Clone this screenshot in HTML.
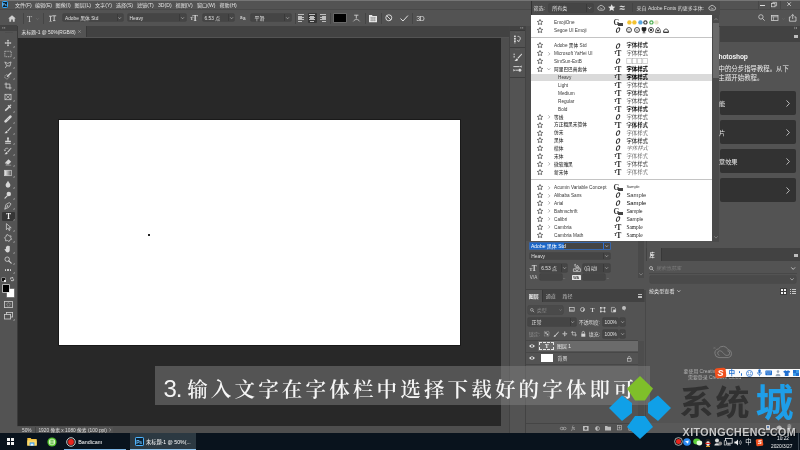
<!DOCTYPE html>
<html lang="zh-CN"><head><meta charset="utf-8"><title>Photoshop</title>
<style>
html,body{margin:0;padding:0;background:#535353;}
#root{will-change:transform;position:relative;width:800px;height:450px;overflow:hidden;font-family:"Liberation Sans","Noto Sans CJK SC",sans-serif;}
#root div,#root span,#root svg{position:absolute;}
#root svg{overflow:visible;}
.t{white-space:nowrap;}
</style></head><body><div id="root">
<div style="left:0px;top:0px;width:800px;height:450px;background:#535353;"></div>
<div style="left:17.3px;top:37.5px;width:483.7px;height:388.3px;background:#282828;"></div>
<div style="left:59.1px;top:119.9px;width:400.5px;height:225px;background:#fff;box-shadow:0 0 0 0.9px #181818;"></div>
<div style="left:148px;top:234px;width:2px;height:2px;background:#222;"></div>
<div style="left:0px;top:0px;width:800px;height:10px;background:#535353;"></div>
<div style="left:1.5px;top:1px;width:6.5px;height:6.5px;background:#0b2233;border:0.7px solid #31a8ff;border-radius:1.2px;box-sizing:border-box;"></div>
<span class="t" style="left:2.6px;top:2px;font-size:3.6px;line-height:6px;color:#7cc6ff;font-weight:bold;letter-spacing:-0.2px;">Ps</span>
<span class="t" style="left:15px;top:1px;font-size:5.1px;line-height:8px;color:#e2e2e2;">文件(F)</span>
<span class="t" style="left:35px;top:1px;font-size:5.1px;line-height:8px;color:#e2e2e2;">编辑(E)</span>
<span class="t" style="left:55.6px;top:1px;font-size:5.1px;line-height:8px;color:#e2e2e2;">图像(I)</span>
<span class="t" style="left:74.6px;top:1px;font-size:5.1px;line-height:8px;color:#e2e2e2;">图层(L)</span>
<span class="t" style="left:95px;top:1px;font-size:5.1px;line-height:8px;color:#e2e2e2;">文字(Y)</span>
<span class="t" style="left:116px;top:1px;font-size:5.1px;line-height:8px;color:#e2e2e2;">选择(S)</span>
<span class="t" style="left:137px;top:1px;font-size:5.1px;line-height:8px;color:#e2e2e2;">滤镜(T)</span>
<span class="t" style="left:158px;top:1px;font-size:5.1px;line-height:8px;color:#e2e2e2;">3D(D)</span>
<span class="t" style="left:175.6px;top:1px;font-size:5.1px;line-height:8px;color:#e2e2e2;">视图(V)</span>
<span class="t" style="left:197px;top:1px;font-size:5.1px;line-height:8px;color:#e2e2e2;">窗口(W)</span>
<span class="t" style="left:219.5px;top:1px;font-size:5.1px;line-height:8px;color:#e2e2e2;">帮助(H)</span>
<div style="left:757.5px;top:1px;width:0.6px;height:8px;background:#484848;"></div>
<div style="left:769.5px;top:1px;width:0.6px;height:8px;background:#484848;"></div>
<div style="left:780px;top:1px;width:0.6px;height:8px;background:#484848;"></div>
<div style="left:759.5px;top:4.9px;width:5px;height:0.9px;background:#dcdcdc;"></div>
<svg style="left:771px;top:2px;" width="6" height="5.2" viewBox="0 0 6 5.2"><rect x="0.4" y="1.6" width="3.6" height="3.2" fill="none" stroke="#d8d8d8" stroke-width="0.7"/><path d="M1.8 1.6V0.4H5.6V3.8H4" fill="none" stroke="#d8d8d8" stroke-width="0.7"/></svg>
<svg style="left:787px;top:2.2px;" width="4.2" height="4.2" viewBox="0 0 4.2 4.2"><path d="M0.3 0.3L3.9 3.9M3.9 0.3L0.3 3.9" stroke="#dcdcdc" stroke-width="0.8"/></svg>
<div style="left:0px;top:10.3px;width:800px;height:15.4px;background:#535353;"></div>
<div style="left:0px;top:9.3px;width:800px;height:1.2px;background:#494949;"></div>
<svg style="left:8px;top:14.5px;" width="8" height="7" viewBox="0 0 8 7"><path d="M4 0.3L0.2 3.6H1.3V6.8H3.2V4.6H4.8V6.8H6.7V3.6H7.8Z" fill="#cfcfcf"/></svg>
<div style="left:22.5px;top:12.5px;width:0.6px;height:11px;background:#454545;"></div>
<span class="t" style="left:26.9px;top:13px;font-size:8.5px;line-height:12px;color:#c4c4c4;font-family:'Liberation Serif',serif;">T</span>
<svg style="left:36px;top:17.5px;" width="3" height="2" viewBox="0 0 3 2"><path d="M0.2 0.3L1.5 1.6L2.8 0.3" fill="none" stroke="#777" stroke-width="0.6"/></svg>
<div style="left:43px;top:12.5px;width:0.6px;height:11px;background:#454545;"></div>
<svg style="left:48.5px;top:14.5px;" width="8" height="7" viewBox="0 0 8 7"><path d="M0 1.2H3M1.5 1.2V6" stroke="#d0d0d0" stroke-width="0.9" fill="none"/><path d="M3.2 0.8H7.2M5.2 0.8V5.4M4 5.6H6.4" stroke="#d0d0d0" stroke-width="0.9" fill="none"/><path d="M0.3 6.4H2.8" stroke="#d0d0d0" stroke-width="0.6"/></svg>
<div style="left:63px;top:14.1px;width:60px;height:7.3px;background:#454545;border-radius:0.8px;box-shadow:0 0 0 0.5px #3c3c3c;"></div>
<span class="t" style="left:65px;top:15px;font-size:4.8px;line-height:7px;color:#e0e0e0;">Adobe 黑体 Std</span>
<svg style="left:118.4px;top:16.75px;" width="3.2" height="2.2" viewBox="0 0 3.2 2.2"><path d="M0.2 0.3L1.6 1.8L3 0.3" fill="none" stroke="#c8c8c8" stroke-width="0.6"/></svg>
<div style="left:116.6px;top:14.1px;width:0.5px;height:7.3px;background:#3a3a3a;"></div>
<div style="left:127.6px;top:14.1px;width:58px;height:7.3px;background:#454545;border-radius:0.8px;box-shadow:0 0 0 0.5px #3c3c3c;"></div>
<span class="t" style="left:129.6px;top:15px;font-size:4.8px;line-height:7px;color:#e0e0e0;">Heavy</span>
<svg style="left:181.0px;top:16.75px;" width="3.2" height="2.2" viewBox="0 0 3.2 2.2"><path d="M0.2 0.3L1.6 1.8L3 0.3" fill="none" stroke="#c8c8c8" stroke-width="0.6"/></svg>
<div style="left:179.2px;top:14.1px;width:0.5px;height:7.3px;background:#3a3a3a;"></div>
<span class="t" style="left:190.3px;top:15px;font-size:4.6px;line-height:7px;color:#d8d8d8;font-family:'Liberation Serif',serif;font-weight:bold;">T</span>
<span class="t" style="left:192.6px;top:13px;font-size:8px;line-height:11px;color:#d8d8d8;font-family:'Liberation Serif',serif;font-weight:bold;">T</span>
<div style="left:202.6px;top:14.1px;width:31.6px;height:7.3px;background:#454545;border-radius:0.8px;box-shadow:0 0 0 0.5px #3c3c3c;"></div>
<span class="t" style="left:204.6px;top:15px;font-size:4.8px;line-height:7px;color:#e0e0e0;">6.53 点</span>
<svg style="left:229.6px;top:16.75px;" width="3.2" height="2.2" viewBox="0 0 3.2 2.2"><path d="M0.2 0.3L1.6 1.8L3 0.3" fill="none" stroke="#c8c8c8" stroke-width="0.6"/></svg>
<div style="left:227.79999999999998px;top:14.1px;width:0.5px;height:7.3px;background:#3a3a3a;"></div>
<span class="t" style="left:240px;top:14px;font-size:4.6px;line-height:7px;color:#d0d0d0;font-weight:bold;">a</span>
<span class="t" style="left:243px;top:15px;font-size:4.6px;line-height:7px;color:#d0d0d0;font-weight:bold;">a</span>
<div style="left:251px;top:14.1px;width:39.6px;height:7.3px;background:#454545;border-radius:0.8px;box-shadow:0 0 0 0.5px #3c3c3c;"></div>
<span class="t" style="left:254.6px;top:15px;font-size:4.9px;line-height:7px;color:#e0e0e0;">平滑</span>
<svg style="left:286.0px;top:16.75px;" width="3.2" height="2.2" viewBox="0 0 3.2 2.2"><path d="M0.2 0.3L1.6 1.8L3 0.3" fill="none" stroke="#c8c8c8" stroke-width="0.6"/></svg>
<div style="left:284.20000000000005px;top:14.1px;width:0.5px;height:7.3px;background:#3a3a3a;"></div>
<div style="left:295px;top:12.5px;width:0.6px;height:11px;background:#454545;"></div>
<div style="left:298px;top:14.3px;width:6.4px;height:0.75px;background:#bcbcbc;"></div>
<div style="left:298px;top:15.55px;width:4.4px;height:0.75px;background:#bcbcbc;"></div>
<div style="left:298px;top:16.8px;width:6.4px;height:0.75px;background:#bcbcbc;"></div>
<div style="left:298px;top:18.05px;width:4.4px;height:0.75px;background:#bcbcbc;"></div>
<div style="left:298px;top:19.3px;width:6.4px;height:0.75px;background:#bcbcbc;"></div>
<div style="left:298px;top:20.55px;width:4.4px;height:0.75px;background:#bcbcbc;"></div>
<div style="left:307.6px;top:12.8px;width:9px;height:10px;background:#363636;border-radius:1px;"></div>
<div style="left:309.0px;top:14.3px;width:6.4px;height:0.75px;background:#bcbcbc;"></div>
<div style="left:310.0px;top:15.55px;width:4.4px;height:0.75px;background:#bcbcbc;"></div>
<div style="left:309.0px;top:16.8px;width:6.4px;height:0.75px;background:#bcbcbc;"></div>
<div style="left:310.0px;top:18.05px;width:4.4px;height:0.75px;background:#bcbcbc;"></div>
<div style="left:309.0px;top:19.3px;width:6.4px;height:0.75px;background:#bcbcbc;"></div>
<div style="left:310.0px;top:20.55px;width:4.4px;height:0.75px;background:#bcbcbc;"></div>
<div style="left:320.0px;top:14.3px;width:6.4px;height:0.75px;background:#bcbcbc;"></div>
<div style="left:322.0px;top:15.55px;width:4.4px;height:0.75px;background:#bcbcbc;"></div>
<div style="left:320.0px;top:16.8px;width:6.4px;height:0.75px;background:#bcbcbc;"></div>
<div style="left:322.0px;top:18.05px;width:4.4px;height:0.75px;background:#bcbcbc;"></div>
<div style="left:320.0px;top:19.3px;width:6.4px;height:0.75px;background:#bcbcbc;"></div>
<div style="left:322.0px;top:20.55px;width:4.4px;height:0.75px;background:#bcbcbc;"></div>
<div style="left:330px;top:12.5px;width:0.6px;height:11px;background:#454545;"></div>
<div style="left:334px;top:14.3px;width:11.8px;height:7.4px;background:#000;box-shadow:0 0 0 0.6px #777;"></div>
<svg style="left:352.5px;top:14px;" width="7" height="8" viewBox="0 0 7 8"><path d="M1.2 1.2H5.4M3.3 1.2V4.6" stroke="#d0d0d0" stroke-width="0.9" fill="none"/><path d="M0.3 7.4C2 4.8 5 4.8 6.7 7.4" stroke="#d0d0d0" stroke-width="0.8" fill="none"/></svg>
<div style="left:364.5px;top:12.5px;width:0.6px;height:11px;background:#454545;"></div>
<svg style="left:369.3px;top:14.6px;" width="8" height="7.2" viewBox="0 0 8 7.2"><path d="M0 0H3L3.6 0.9H8V7.2H0Z" fill="#e8e8e8"/><path d="M1.2 2.4H6.8M1.2 3.9H6.8M1.2 5.4H6.8M3 2.4V6.4M5.2 2.4V6.4" stroke="#666" stroke-width="0.4"/></svg>
<div style="left:381px;top:12.5px;width:0.6px;height:11px;background:#454545;"></div>
<svg style="left:385.2px;top:14px;" width="7.6" height="7.6" viewBox="0 0 7.6 7.6"><circle cx="3.8" cy="3.8" r="3" fill="none" stroke="#e2e2e2" stroke-width="0.9"/><path d="M1.7 1.7L5.9 5.9" stroke="#e2e2e2" stroke-width="0.9"/></svg>
<svg style="left:400px;top:14.5px;" width="8.4" height="6.6" viewBox="0 0 8.4 6.6"><path d="M0.5 3.6L3 6L7.9 0.6" fill="none" stroke="#e2e2e2" stroke-width="1"/></svg>
<div style="left:411.5px;top:12.5px;width:0.6px;height:11px;background:#454545;"></div>
<span class="t" style="left:416.3px;top:13px;font-size:7.2px;line-height:11px;color:#dedede;letter-spacing:-0.7px;">3D</span>
<svg style="left:757.8px;top:14.4px;" width="7" height="7" viewBox="0 0 7 7"><circle cx="2.9" cy="2.9" r="2.2" fill="none" stroke="#cfcfcf" stroke-width="0.8"/><path d="M4.5 4.5L6.6 6.6" stroke="#cfcfcf" stroke-width="0.9"/></svg>
<svg style="left:770.5px;top:15.3px;" width="7.4" height="6" viewBox="0 0 7.4 6"><rect x="0.4" y="0.4" width="6.6" height="5.2" fill="none" stroke="#cfcfcf" stroke-width="0.8"/><path d="M0.4 1.8H7M2.4 1.8V5.6" stroke="#cfcfcf" stroke-width="0.7"/></svg>
<svg style="left:781.8px;top:17.6px;" width="3" height="2" viewBox="0 0 3 2"><path d="M0.2 0.3L1.5 1.6L2.8 0.3" fill="none" stroke="#6a6a6a" stroke-width="0.6"/></svg>
<svg style="left:789px;top:13.8px;" width="7.4" height="7.6" viewBox="0 0 7.4 7.6"><path d="M2 3H0.4V7.2H7V3H5.4" fill="none" stroke="#d4d4d4" stroke-width="0.8"/><path d="M3.7 5V0.6M2.2 2L3.7 0.5L5.2 2" fill="none" stroke="#d4d4d4" stroke-width="0.8"/></svg>
<div style="left:0px;top:25.7px;width:800px;height:0.6px;background:#3c3c3c;"></div>
<div style="left:17px;top:26px;width:492px;height:11px;background:#424242;"></div>
<div style="left:17.5px;top:26.3px;width:68.5px;height:10.7px;background:#535353;"></div>
<div style="left:86px;top:26.3px;width:0.6px;height:10.7px;background:#383838;"></div>
<span class="t" style="left:21.6px;top:29px;font-size:4.85px;line-height:7px;color:#e8e8e8;">未标题-1 @ 50%(RGB/8)</span>
<svg style="left:78.4px;top:30.4px;" width="3" height="3" viewBox="0 0 3 3"><path d="M0.3 0.3L2.7 2.7M2.7 0.3L0.3 2.7" stroke="#bbb" stroke-width="0.5"/></svg>
<div style="left:0px;top:26px;width:17px;height:407px;background:#535353;"></div>
<div style="left:0px;top:25.4px;width:16.6px;height:5.2px;background:#424242;"></div>
<svg style="left:4.5px;top:32.4px;" width="8" height="1" viewBox="0 0 8 1"><path d="M0 0.5H8" stroke="#444" stroke-width="0.6" stroke-dasharray="0.6 0.5"/></svg>
<div style="left:16.6px;top:26px;width:0.7px;height:407px;background:#3a3a3a;"></div>
<svg style="left:2px;top:27.3px;" width="3.4" height="1.8" viewBox="0 0 3.4 1.8"><path d="M0.2 0.9H1.4M2 0.9H3.2" stroke="#bbb" stroke-width="0.8"/></svg>
<svg style="left:4.4px;top:39px;" width="8" height="8" viewBox="0 0 10 10"><path d="M5 0.6L6.4 2.4H5.5V4.5H7.6V3.6L9.4 5L7.6 6.4V5.5H5.5V7.6H6.4L5 9.4L3.6 7.6H4.5V5.5H2.4V6.4L0.6 5L2.4 3.6V4.5H4.5V2.4H3.6Z" fill="#d6d6d6"/></svg>
<svg style="left:12.6px;top:45.6px;" width="1.4" height="1.4" viewBox="0 0 1.4 1.4"><path d="M1.6 0V1.6H0Z" fill="#bdbdbd"/></svg>
<svg style="left:4.4px;top:50px;" width="8" height="8" viewBox="0 0 10 10"><rect x="1" y="1.6" width="8" height="6.8" fill="none" stroke="#d6d6d6" stroke-width="0.9" stroke-dasharray="1.3 0.9"/></svg>
<svg style="left:12.6px;top:56.6px;" width="1.4" height="1.4" viewBox="0 0 1.4 1.4"><path d="M1.6 0V1.6H0Z" fill="#bdbdbd"/></svg>
<svg style="left:4.4px;top:60.5px;" width="8" height="8" viewBox="0 0 10 10"><path d="M1 1.2L4.6 3L8.8 1.2L7.4 6.4L3.4 5.8L1.6 8.8" fill="none" stroke="#d6d6d6" stroke-width="0.9"/><path d="M1 1.2L3.4 5.8" stroke="#d6d6d6" stroke-width="0.9"/></svg>
<svg style="left:12.6px;top:67.1px;" width="1.4" height="1.4" viewBox="0 0 1.4 1.4"><path d="M1.6 0V1.6H0Z" fill="#bdbdbd"/></svg>
<svg style="left:4.4px;top:71.5px;" width="8" height="8" viewBox="0 0 10 10"><circle cx="3.6" cy="6" r="2.6" fill="none" stroke="#d6d6d6" stroke-width="0.8" stroke-dasharray="1.2 0.8"/><path d="M4.4 5.4L8.6 1.2" stroke="#d6d6d6" stroke-width="1.6" stroke-linecap="round"/></svg>
<svg style="left:12.6px;top:78.1px;" width="1.4" height="1.4" viewBox="0 0 1.4 1.4"><path d="M1.6 0V1.6H0Z" fill="#bdbdbd"/></svg>
<svg style="left:4.4px;top:82px;" width="8" height="8" viewBox="0 0 10 10"><path d="M2.6 0.6V7.4H9.4M0.6 2.6H7.4V9.4" fill="none" stroke="#d6d6d6" stroke-width="1"/></svg>
<svg style="left:12.6px;top:88.6px;" width="1.4" height="1.4" viewBox="0 0 1.4 1.4"><path d="M1.6 0V1.6H0Z" fill="#bdbdbd"/></svg>
<svg style="left:4.4px;top:93px;" width="8" height="8" viewBox="0 0 10 10"><rect x="1.2" y="1.6" width="7.6" height="6.8" fill="none" stroke="#d6d6d6" stroke-width="0.9"/><path d="M1.2 1.6L8.8 8.4M8.8 1.6L1.2 8.4" stroke="#d6d6d6" stroke-width="0.7"/></svg>
<svg style="left:12.6px;top:99.6px;" width="1.4" height="1.4" viewBox="0 0 1.4 1.4"><path d="M1.6 0V1.6H0Z" fill="#bdbdbd"/></svg>
<svg style="left:4.4px;top:104px;" width="8" height="8" viewBox="0 0 10 10"><path d="M1 9L1.6 7L5.6 3L7 4.4L3 8.4Z" fill="#d6d6d6"/><path d="M5.4 2L8 4.6M6.4 3.4L8.4 1.4" stroke="#d6d6d6" stroke-width="1.6" stroke-linecap="round"/></svg>
<svg style="left:12.6px;top:110.6px;" width="1.4" height="1.4" viewBox="0 0 1.4 1.4"><path d="M1.6 0V1.6H0Z" fill="#bdbdbd"/></svg>
<svg style="left:4.4px;top:115px;" width="8" height="8" viewBox="0 0 10 10"><path d="M2 8L8 2" stroke="#d6d6d6" stroke-width="3.4" stroke-linecap="round"/><path d="M3.6 6.4L6.4 3.6" stroke="#535353" stroke-width="0.7" stroke-dasharray="0.7 0.7"/></svg>
<svg style="left:12.6px;top:121.6px;" width="1.4" height="1.4" viewBox="0 0 1.4 1.4"><path d="M1.6 0V1.6H0Z" fill="#bdbdbd"/></svg>
<svg style="left:4.4px;top:126px;" width="8" height="8" viewBox="0 0 10 10"><path d="M8.8 0.8L4 6L5 7L9.4 1.6Z" fill="#d6d6d6"/><path d="M3.4 6.4C2 6.6 2 8.4 0.6 9C2.6 9.6 4.6 8.8 4.6 7.4Z" fill="#d6d6d6"/></svg>
<svg style="left:12.6px;top:132.6px;" width="1.4" height="1.4" viewBox="0 0 1.4 1.4"><path d="M1.6 0V1.6H0Z" fill="#bdbdbd"/></svg>
<svg style="left:4.4px;top:136.5px;" width="8" height="8" viewBox="0 0 10 10"><path d="M3.8 1.2C3.8 0 6.2 0 6.2 1.2C6.2 2.6 5.6 3.2 5.8 4.6H8.6V6.6H1.4V4.6H4.2C4.4 3.2 3.8 2.6 3.8 1.2Z" fill="#d6d6d6"/><path d="M1.4 8H8.6" stroke="#d6d6d6" stroke-width="1"/></svg>
<svg style="left:12.6px;top:143.1px;" width="1.4" height="1.4" viewBox="0 0 1.4 1.4"><path d="M1.6 0V1.6H0Z" fill="#bdbdbd"/></svg>
<svg style="left:4.4px;top:147px;" width="8" height="8" viewBox="0 0 10 10"><path d="M8.8 0.8L4 6L5 7L9.4 1.6Z" fill="#d6d6d6"/><path d="M3.4 6.4C2 6.6 2 8.4 0.6 9C2.6 9.6 4.6 8.8 4.6 7.4Z" fill="#d6d6d6"/><path d="M1 4.4A2.6 2.6 0 0 1 5.4 2.2" fill="none" stroke="#d6d6d6" stroke-width="0.8"/><path d="M0.2 3.4L1 5L2.4 4" fill="none" stroke="#d6d6d6" stroke-width="0.7"/></svg>
<svg style="left:12.6px;top:153.6px;" width="1.4" height="1.4" viewBox="0 0 1.4 1.4"><path d="M1.6 0V1.6H0Z" fill="#bdbdbd"/></svg>
<svg style="left:4.4px;top:158px;" width="8" height="8" viewBox="0 0 10 10"><path d="M1 6.4L5.6 1.6L9 4.6L5.6 8.2H3Z" fill="#d6d6d6"/><path d="M1.6 6L4.4 8.4" stroke="#535353" stroke-width="0.7"/><path d="M2 9H9" stroke="#d6d6d6" stroke-width="0.6"/></svg>
<svg style="left:12.6px;top:164.6px;" width="1.4" height="1.4" viewBox="0 0 1.4 1.4"><path d="M1.6 0V1.6H0Z" fill="#bdbdbd"/></svg>
<svg style="left:4.4px;top:169px;" width="8" height="8" viewBox="0 0 10 10"><defs><linearGradient id="gg" x1="0" x2="1"><stop offset="0" stop-color="#f0f0f0"/><stop offset="1" stop-color="#555"/></linearGradient></defs><rect x="0.8" y="1.6" width="8.4" height="6.8" fill="url(#gg)" stroke="#d6d6d6" stroke-width="0.8"/></svg>
<svg style="left:12.6px;top:175.6px;" width="1.4" height="1.4" viewBox="0 0 1.4 1.4"><path d="M1.6 0V1.6H0Z" fill="#bdbdbd"/></svg>
<svg style="left:4.4px;top:180px;" width="8" height="8" viewBox="0 0 10 10"><path d="M5 0.8C6.4 3.4 8 4.8 8 6.6A3 3 0 0 1 2 6.6C2 4.8 3.6 3.4 5 0.8Z" fill="#d6d6d6"/></svg>
<svg style="left:12.6px;top:186.6px;" width="1.4" height="1.4" viewBox="0 0 1.4 1.4"><path d="M1.6 0V1.6H0Z" fill="#bdbdbd"/></svg>
<svg style="left:4.4px;top:191px;" width="8" height="8" viewBox="0 0 10 10"><circle cx="6" cy="3.8" r="2.8" fill="#d6d6d6"/><path d="M4 6L1.2 9" stroke="#d6d6d6" stroke-width="1.4" stroke-linecap="round"/></svg>
<svg style="left:12.6px;top:197.6px;" width="1.4" height="1.4" viewBox="0 0 1.4 1.4"><path d="M1.6 0V1.6H0Z" fill="#bdbdbd"/></svg>
<svg style="left:4.4px;top:201.5px;" width="8" height="8" viewBox="0 0 10 10"><path d="M8.8 2.4L6.6 0.8L2.4 3.2L1 9L6 6.6Z" fill="none" stroke="#d6d6d6" stroke-width="0.9"/><circle cx="4.4" cy="5" r="0.9" fill="#d6d6d6"/><path d="M1 9L4 5.4" stroke="#d6d6d6" stroke-width="0.6"/></svg>
<svg style="left:12.6px;top:208.1px;" width="1.4" height="1.4" viewBox="0 0 1.4 1.4"><path d="M1.6 0V1.6H0Z" fill="#bdbdbd"/></svg>
<div style="left:2px;top:211.6px;width:13px;height:9.4px;background:#363636;border-radius:1px;"></div>
<span class="t" style="left:6px;top:211px;font-size:7.6px;line-height:11px;color:#f0f0f0;font-family:'Liberation Serif',serif;font-weight:bold;">T</span>
<svg style="left:13.2px;top:219px;" width="1.6" height="1.6" viewBox="0 0 1.6 1.6"><path d="M1.6 0V1.6H0Z" fill="#bdbdbd"/></svg>
<svg style="left:4.4px;top:223px;" width="8" height="8" viewBox="0 0 10 10"><path d="M3 0.8V8.4L5 6.4L6.4 9.4L7.6 8.8L6.2 6H9Z" fill="none" stroke="#d6d6d6" stroke-width="0.9"/></svg>
<svg style="left:12.6px;top:229.6px;" width="1.4" height="1.4" viewBox="0 0 1.4 1.4"><path d="M1.6 0V1.6H0Z" fill="#bdbdbd"/></svg>
<svg style="left:4.4px;top:234px;" width="8" height="8" viewBox="0 0 10 10"><path d="M5 0.8L6.4 2.6L8.8 2.4L8.4 4.8L9.6 6.6L7.4 7.4L6.4 9.4L4.4 8.2L2 8.6L2 6.4L0.6 4.6L2.6 3.4L3 1.2Z" fill="none" stroke="#d6d6d6" stroke-width="0.9"/></svg>
<svg style="left:12.6px;top:240.6px;" width="1.4" height="1.4" viewBox="0 0 1.4 1.4"><path d="M1.6 0V1.6H0Z" fill="#bdbdbd"/></svg>
<svg style="left:4.4px;top:245px;" width="8" height="8" viewBox="0 0 10 10"><path d="M2.4 5.6V2.6C2.4 1.8 3.6 1.8 3.6 2.6V1.6C3.6 0.8 4.8 0.8 4.8 1.6V1.4C4.8 0.6 6 0.6 6 1.4V2C6 1.2 7.2 1.2 7.2 2V6.4C7.2 8.4 6.2 9.4 4.6 9.4C3 9.4 2.6 8.6 0.8 6C0.4 5.2 1.4 4.6 2.4 5.6Z" fill="#d6d6d6"/></svg>
<svg style="left:12.6px;top:251.6px;" width="1.4" height="1.4" viewBox="0 0 1.4 1.4"><path d="M1.6 0V1.6H0Z" fill="#bdbdbd"/></svg>
<svg style="left:4.4px;top:256px;" width="8" height="8" viewBox="0 0 10 10"><circle cx="4" cy="4" r="2.8" fill="none" stroke="#d6d6d6" stroke-width="1"/><path d="M6 6L9 9" stroke="#d6d6d6" stroke-width="1.4" stroke-linecap="round"/></svg>
<svg style="left:12.6px;top:262.6px;" width="1.4" height="1.4" viewBox="0 0 1.4 1.4"><path d="M1.6 0V1.6H0Z" fill="#bdbdbd"/></svg>
<div style="left:4.6px;top:269.4px;width:1.4px;height:1.4px;background:#d6d6d6;border-radius:50%;"></div>
<div style="left:7.199999999999999px;top:269.4px;width:1.4px;height:1.4px;background:#d6d6d6;border-radius:50%;"></div>
<div style="left:9.8px;top:269.4px;width:1.4px;height:1.4px;background:#d6d6d6;border-radius:50%;"></div>
<svg style="left:13.2px;top:272px;" width="1.6" height="1.6" viewBox="0 0 1.6 1.6"><path d="M1.6 0V1.6H0Z" fill="#bdbdbd"/></svg>
<div style="left:2.4px;top:278.4px;width:2.4px;height:2.4px;background:#111;box-shadow:0 0 0 0.4px #ccc;"></div>
<div style="left:3.8px;top:279.8px;width:2.4px;height:2.4px;background:#eee;"></div>
<svg style="left:9.6px;top:277.4px;" width="4.4" height="4.4" viewBox="0 0 4.4 4.4"><path d="M0.6 2.4V0.8H3M3.6 1.6V3.6H1.4" fill="none" stroke="#d6d6d6" stroke-width="0.7"/><path d="M2.2 0L3.4 0.8L2.2 1.6ZM2.2 2.8L1 3.6L2.2 4.4Z" fill="#d6d6d6"/></svg>
<div style="left:7px;top:289px;width:7px;height:7.6px;background:#fff;box-shadow:0 0 0 0.5px #999;"></div>
<div style="left:2.6px;top:285px;width:6.6px;height:7px;background:#000;box-shadow:0 0 0 0.7px #ddd;"></div>
<svg style="left:4px;top:300.6px;" width="9" height="7" viewBox="0 0 9 7"><rect x="0.4" y="0.4" width="8.2" height="6.2" fill="none" stroke="#d0d0d0" stroke-width="0.8"/><circle cx="4.5" cy="3.5" r="1.7" fill="none" stroke="#d0d0d0" stroke-width="0.7" stroke-dasharray="0.8 0.6"/></svg>
<svg style="left:4px;top:312px;" width="9" height="8" viewBox="0 0 9 8"><rect x="2.4" y="0.4" width="6.2" height="4.6" fill="none" stroke="#d0d0d0" stroke-width="0.8"/><rect x="0.4" y="2.4" width="6.2" height="4.6" fill="#535353" stroke="#d0d0d0" stroke-width="0.8"/></svg>
<svg style="left:13.2px;top:319px;" width="1.6" height="1.6" viewBox="0 0 1.6 1.6"><path d="M1.6 0V1.6H0Z" fill="#bdbdbd"/></svg>
<div style="left:501px;top:37.5px;width:8px;height:395.5px;background:#4e4e4e;"></div>
<div style="left:509.3px;top:26px;width:16.2px;height:407px;background:#535353;"></div>
<div style="left:509.3px;top:26px;width:16.2px;height:4.2px;background:#424242;"></div>
<svg style="left:519.5px;top:27.3px;" width="3.4" height="1.8" viewBox="0 0 3.4 1.8"><path d="M0.2 0.9H1.4M2 0.9H3.2" stroke="#bbb" stroke-width="0.8"/></svg>
<div style="left:509.3px;top:30.2px;width:16.2px;height:0.6px;background:#3a3a3a;"></div>
<div style="left:509.3px;top:46.6px;width:16.2px;height:0.7px;background:#3e3e3e;"></div>
<div style="left:509.3px;top:76.6px;width:16.2px;height:0.7px;background:#3e3e3e;"></div>
<svg style="left:513px;top:34.5px;" width="9" height="9" viewBox="0 0 9 9"><rect x="1" y="0.6" width="1.8" height="1.6" fill="#d8d8d8"/><rect x="1" y="3" width="1.8" height="1.6" fill="#d8d8d8"/><rect x="1" y="5.4" width="1.8" height="1.6" fill="#d8d8d8"/><path d="M1.9 7V8.6" stroke="#d8d8d8" stroke-width="0.7"/><path d="M4.6 1.4C7.6 1 8.4 4.6 5.4 6" fill="none" stroke="#d8d8d8" stroke-width="0.9"/><path d="M4.2 5L5.2 6.6L6.8 5.8" fill="none" stroke="#d8d8d8" stroke-width="0.8"/></svg>
<svg style="left:514.6px;top:32.2px;" width="5.6" height="1" viewBox="0 0 5.6 1"><path d="M0 0.5H5.6" stroke="#6a6a6a" stroke-width="0.5" stroke-dasharray="0.6 0.5"/></svg>
<div style="left:529.2px;top:34.4px;width:0.9px;height:3.4px;background:#777;"></div>
<div style="left:529.2px;top:47.6px;width:0.9px;height:5px;background:#777;"></div>
<svg style="left:514.6px;top:48.9px;" width="5.6" height="1" viewBox="0 0 5.6 1"><path d="M0 0.5H5" stroke="#6a6a6a" stroke-width="0.5" stroke-dasharray="0.6 0.5"/></svg>
<svg style="left:512.6px;top:52.6px;" width="9" height="9" viewBox="0 0 9 9"><rect x="0.4" y="0.6" width="1.6" height="1.6" fill="#aaa"/><rect x="0.4" y="3" width="1.6" height="1.6" fill="#aaa"/><path d="M8.6 0.6L4.4 5L5.2 5.8L9 1.4Z" fill="#e0e0e0"/><path d="M4 5.4C2.8 5.6 2.8 7.2 1.4 7.8C3.2 8.4 5 7.6 5 6.4Z" fill="#e0e0e0"/></svg>
<svg style="left:512.8px;top:65.4px;" width="9" height="7" viewBox="0 0 9 7"><path d="M0.4 1.6H6.6M2.4 5.2H8.6" stroke="#e0e0e0" stroke-width="0.9"/><path d="M8.6 0.4L6.8 1.6L8.6 2.8ZM0.4 4L2.2 5.2L0.4 6.4Z" fill="#e0e0e0"/><rect x="5.8" y="3.8" width="2" height="2.8" fill="#e0e0e0"/></svg>
<div style="left:526px;top:26px;width:5.5px;height:407px;background:#4b4b4b;"></div>
<div style="left:508.5px;top:26px;width:1px;height:407px;background:#434343;"></div>
<div style="left:525.3px;top:26px;width:1px;height:407px;background:#434343;"></div>
<div style="left:720px;top:25.7px;width:80px;height:5px;background:#424242;"></div>
<div style="left:720px;top:30.5px;width:80px;height:0.5px;background:#383838;"></div>
<div style="left:720px;top:31px;width:80px;height:11px;background:#424242;"></div>
<svg style="left:793.6px;top:27.2px;" width="3.6" height="2" viewBox="0 0 3.6 2"><path d="M0.3 0.2L1.2 1L0.3 1.8M2 0.2L2.9 1L2 1.8" fill="none" stroke="#c8c8c8" stroke-width="0.6"/></svg>
<div style="left:794px;top:35.0px;width:4px;height:0.6px;background:#bdbdbd;"></div>
<div style="left:794px;top:36.1px;width:4px;height:0.6px;background:#bdbdbd;"></div>
<div style="left:794px;top:37.2px;width:4px;height:0.6px;background:#bdbdbd;"></div>
<div style="left:720px;top:42px;width:80px;height:204px;background:#535353;"></div>
<span class="t" style="left:714.2px;top:52px;font-size:6.7px;line-height:9px;color:#f2f2f2;font-weight:bold;letter-spacing:-0.15px;">Photoshop</span>
<span class="t" style="left:705.8px;top:64px;font-size:6.4px;line-height:9px;color:#ededed;">应用中的分步指导教程。从下</span>
<span class="t" style="left:705.8px;top:73px;font-size:6.4px;line-height:9px;color:#ededed;">面的主题开始教程。</span>
<div style="left:720px;top:91px;width:76px;height:24.3px;background:#323232;border-radius:2px;"></div>
<span class="t" style="left:700.4px;top:99px;font-size:6.2px;line-height:9px;color:#e6e6e6;">基本技能</span>
<svg style="left:785.6px;top:99.6px;" width="4" height="7" viewBox="0 0 4 7"><path d="M0.5 0.4L3.4 3.5L0.5 6.6" fill="none" stroke="#d8d8d8" stroke-width="0.8"/></svg>
<div style="left:720px;top:120px;width:76px;height:24.3px;background:#323232;border-radius:2px;"></div>
<span class="t" style="left:700.4px;top:128px;font-size:6.2px;line-height:9px;color:#e6e6e6;">修复照片</span>
<svg style="left:785.6px;top:128.6px;" width="4" height="7" viewBox="0 0 4 7"><path d="M0.5 0.4L3.4 3.5L0.5 6.6" fill="none" stroke="#d8d8d8" stroke-width="0.8"/></svg>
<div style="left:720px;top:149px;width:76px;height:24.3px;background:#323232;border-radius:2px;"></div>
<span class="t" style="left:700.4px;top:157px;font-size:6.2px;line-height:9px;color:#e6e6e6;">制作创意效果</span>
<svg style="left:785.6px;top:157.6px;" width="4" height="7" viewBox="0 0 4 7"><path d="M0.5 0.4L3.4 3.5L0.5 6.6" fill="none" stroke="#d8d8d8" stroke-width="0.8"/></svg>
<div style="left:720px;top:178px;width:76px;height:24.3px;background:#323232;border-radius:2px;"></div>
<svg style="left:785.6px;top:186.6px;" width="4" height="7" viewBox="0 0 4 7"><path d="M0.5 0.4L3.4 3.5L0.5 6.6" fill="none" stroke="#d8d8d8" stroke-width="0.8"/></svg>
<div style="left:644px;top:241px;width:2.5px;height:192px;background:#484848;"></div>
<div style="left:646.4px;top:247.6px;width:153.6px;height:13px;background:#424242;"></div>
<div style="left:646.6px;top:248px;width:14.2px;height:12.6px;background:#535353;"></div>
<div style="left:660.8px;top:248px;width:0.5px;height:12.6px;background:#383838;"></div>
<span class="t" style="left:649.6px;top:251px;font-size:5.2px;line-height:8px;color:#f0f0f0;font-weight:bold;">库</span>
<div style="left:794px;top:254.0px;width:4px;height:0.6px;background:#bdbdbd;"></div>
<div style="left:794px;top:255.1px;width:4px;height:0.6px;background:#bdbdbd;"></div>
<div style="left:794px;top:256.2px;width:4px;height:0.6px;background:#bdbdbd;"></div>
<div style="left:646.2px;top:260.6px;width:153.8px;height:172.4px;background:#535353;"></div>
<svg style="left:649.4px;top:265.6px;" width="5" height="5" viewBox="0 0 5 5"><circle cx="2" cy="2" r="1.5" fill="none" stroke="#d0d0d0" stroke-width="0.7"/><path d="M3.1 3.1L4.6 4.6" stroke="#d0d0d0" stroke-width="0.8"/></svg>
<span class="t" style="left:656px;top:264px;font-size:5px;line-height:8px;color:#7a7a7a;font-style:italic;">搜索当前库</span>
<svg style="left:790.6px;top:266.6px;" width="4.4" height="3" viewBox="0 0 4.4 3"><path d="M0.3 0.4L2.2 2.4L4.1 0.4" fill="none" stroke="#d6d6d6" stroke-width="0.8"/></svg>
<div style="left:648.6px;top:273.2px;width:148px;height:0.5px;background:#484848;"></div>
<div style="left:649.6px;top:276.4px;width:146.8px;height:6.8px;background:#4a4a4a;border-radius:1px;box-shadow:0 0 0 0.4px #444;"></div>
<svg style="left:790px;top:278.4px;" width="4" height="2.6" viewBox="0 0 4 2.6"><path d="M0.3 0.3L2 2.1L3.7 0.3" fill="none" stroke="#c4c4c4" stroke-width="0.7"/></svg>
<span class="t" style="left:649px;top:287px;font-size:5.1px;line-height:8px;color:#e6e6e6;">按类型查看</span>
<svg style="left:677px;top:290px;" width="3.6" height="2.6" viewBox="0 0 3.6 2.6"><path d="M0.3 0.3L1.8 1.9L3.3 0.3" fill="none" stroke="#e0e0e0" stroke-width="0.7"/></svg>
<div style="left:779.6px;top:287.6px;width:7.4px;height:7.4px;background:#3a3a3a;border-radius:1px;"></div>
<div style="left:781.0px;top:289.0px;width:2px;height:2px;background:#f0f0f0;"></div>
<div style="left:781.0px;top:291.6px;width:2px;height:2px;background:#f0f0f0;"></div>
<div style="left:783.6px;top:289.0px;width:2px;height:2px;background:#f0f0f0;"></div>
<div style="left:783.6px;top:291.6px;width:2px;height:2px;background:#f0f0f0;"></div>
<div style="left:789.6px;top:289px;width:1.4px;height:1.2px;background:#c8c8c8;"></div>
<div style="left:791.6px;top:289px;width:4px;height:1.2px;background:#c8c8c8;"></div>
<div style="left:789.6px;top:291px;width:1.4px;height:1.2px;background:#c8c8c8;"></div>
<div style="left:791.6px;top:291px;width:4px;height:1.2px;background:#c8c8c8;"></div>
<div style="left:789.6px;top:293px;width:1.4px;height:1.2px;background:#c8c8c8;"></div>
<div style="left:791.6px;top:293px;width:4px;height:1.2px;background:#c8c8c8;"></div>
<svg style="left:712.6px;top:345.6px;" width="21" height="14" viewBox="0 0 21 14"><path d="M6 11.6A4.4 4.4 0 0 1 5.4 2.9A5.4 5.4 0 0 1 15 3.6A4.1 4.1 0 0 1 15.6 11.6Z" fill="none" stroke="#828282" stroke-width="0.9"/><path d="M6.4 9.4A2.4 2.4 0 0 1 6.4 4.8C8.4 4.6 9.6 6.2 10.6 7.4C11.6 8.6 12.6 9.6 14.4 9.4A2.3 2.3 0 0 0 14.4 4.8" fill="none" stroke="#828282" stroke-width="0.9"/><path d="M0.4 0.8L2.6 3M2.6 0.8L0.4 3" stroke="#7b7b7b" stroke-width="0.5"/></svg>
<span class="t" style="left:683.6px;top:368px;font-size:4.9px;line-height:7px;color:#b4b4b4;">要使用 Creative Cloud Libraries,</span>
<span class="t" style="left:688px;top:374px;font-size:4.9px;line-height:7px;color:#b4b4b4;">需要登录 Creative Cloud</span>
<div style="left:646.5px;top:422.6px;width:153.5px;height:10.4px;background:#595959;"></div>
<div style="left:765.6px;top:425px;width:4.4px;height:4.6px;background:#cfcfcf;border-radius:0.5px;"></div>
<div style="left:766.8px;top:426.2px;width:2px;height:2.2px;background:#5b7fb0;"></div>
<svg style="left:776.4px;top:425px;" width="6" height="4.6" viewBox="0 0 6 4.6"><path d="M1.6 4.2A1.5 1.5 0 0 1 1.6 1.3A2 2 0 0 1 5 1.5A1.4 1.4 0 0 1 4.8 4.2Z" fill="#bbb"/></svg>
<svg style="left:786.8px;top:424.4px;" width="4.6" height="5.6" viewBox="0 0 4.6 5.6"><path d="M0.2 1H4.4M1.6 1V0.3H3V1M0.8 1.4V5.3H3.8V1.4Z" fill="#9a9a9a" stroke="#9a9a9a" stroke-width="0.5"/></svg>
<div style="left:531.5px;top:241px;width:114px;height:48.6px;background:#535353;"></div>
<div style="left:526px;top:241px;width:5.5px;height:192px;background:#4a4a4a;"></div>
<div style="left:526.2px;top:241px;width:119.2px;height:48.6px;background:#535353;"></div>
<div style="left:638.2px;top:241px;width:5.4px;height:37px;background:#4a4a4a;"></div>
<svg style="left:639px;top:273.4px;" width="4" height="2.6" viewBox="0 0 4 2.6"><path d="M0.3 0.3L2 2.1L3.7 0.3" fill="none" stroke="#9a9a9a" stroke-width="0.6"/></svg>
<div style="left:529.8px;top:242.6px;width:79.8px;height:6.6px;background:#444;box-shadow:0 0 0 0.7px #2d6fd0;"></div>
<div style="left:530.4px;top:243.2px;width:33.8px;height:5.4px;background:#1a66c8;"></div>
<span class="t" style="left:531px;top:242px;font-size:5px;line-height:8px;color:#fff;">Adobe 黑体 Std</span>
<div style="left:603.4px;top:242.6px;width:0.5px;height:6.6px;background:#2d6fd0;"></div>
<svg style="left:604.8px;top:244.8px;" width="3.4" height="2.4" viewBox="0 0 3.4 2.4"><path d="M0.3 0.3L1.7 1.9L3.1 0.3" fill="none" stroke="#d0d0d0" stroke-width="0.6"/></svg>
<div style="left:530px;top:252.6px;width:79.6px;height:6.6px;background:#454545;border-radius:0.8px;box-shadow:0 0 0 0.5px #3c3c3c;"></div>
<span class="t" style="left:531.2px;top:253px;font-size:4.9px;line-height:7px;color:#e0e0e0;">Heavy</span>
<svg style="left:605.0px;top:254.9px;" width="3.2" height="2.2" viewBox="0 0 3.2 2.2"><path d="M0.2 0.3L1.6 1.8L3 0.3" fill="none" stroke="#c8c8c8" stroke-width="0.6"/></svg>
<div style="left:603.2px;top:252.6px;width:0.5px;height:6.6px;background:#3a3a3a;"></div>
<span class="t" style="left:529.6px;top:266px;font-size:4.2px;line-height:7px;color:#d8d8d8;font-family:'Liberation Serif',serif;font-weight:bold;">T</span>
<span class="t" style="left:531.8px;top:263px;font-size:7.4px;line-height:11px;color:#d8d8d8;font-family:'Liberation Serif',serif;font-weight:bold;">T</span>
<div style="left:539.6px;top:264.2px;width:27.6px;height:7.4px;background:#454545;border-radius:0.8px;box-shadow:0 0 0 0.5px #3c3c3c;"></div>
<span class="t" style="left:541.2px;top:265px;font-size:4.9px;line-height:7px;color:#e0e0e0;">6.53 点</span>
<svg style="left:562.6px;top:266.9px;" width="3.2" height="2.2" viewBox="0 0 3.2 2.2"><path d="M0.2 0.3L1.6 1.8L3 0.3" fill="none" stroke="#c8c8c8" stroke-width="0.6"/></svg>
<div style="left:560.8000000000001px;top:264.2px;width:0.5px;height:7.4px;background:#3a3a3a;"></div>
<svg style="left:572.6px;top:264px;" width="8.4" height="8" viewBox="0 0 8.4 8"><path d="M1 1.4L2.2 0.2L3.4 1.4M2.2 0.4V3" fill="none" stroke="#d8d8d8" stroke-width="0.6"/><path d="M2.6 4.2L4.6 1.4L6.6 4.2M3.4 3.4H5.8" fill="none" stroke="#d8d8d8" stroke-width="0.7"/><path d="M0.4 4.8H7.6V7.4H0.4ZM2.4 5.6L4 7L5.6 5.6" fill="none" stroke="#d8d8d8" stroke-width="0.7"/></svg>
<div style="left:582.6px;top:264.2px;width:27px;height:7.4px;background:#454545;border-radius:0.8px;box-shadow:0 0 0 0.5px #3c3c3c;"></div>
<span class="t" style="left:584.2px;top:265px;font-size:4.9px;line-height:7px;color:#e0e0e0;">(自动)</span>
<svg style="left:605.0px;top:266.9px;" width="3.2" height="2.2" viewBox="0 0 3.2 2.2"><path d="M0.2 0.3L1.6 1.8L3 0.3" fill="none" stroke="#c8c8c8" stroke-width="0.6"/></svg>
<div style="left:603.2px;top:264.2px;width:0.5px;height:7.4px;background:#3a3a3a;"></div>
<span class="t" style="left:529.8px;top:274px;font-size:4.6px;line-height:7px;color:#cfcfcf;">V/A</span>
<div style="left:539.6px;top:274.4px;width:22px;height:5.8px;background:#454545;border-radius:0.8px;box-shadow:0 0 0 0.5px #3c3c3c;"></div>
<span class="t" style="left:563px;top:274px;font-size:4.4px;line-height:7px;color:#bbb;">..</span>
<div style="left:572.4px;top:274.8px;width:8.6px;height:4.8px;background:#e4e4e4;border-radius:0.6px;"></div>
<span class="t" style="left:573.2px;top:275px;font-size:3.6px;line-height:6px;color:#444;font-weight:bold;">WA</span>
<div style="left:583px;top:274.4px;width:22px;height:5.8px;background:#454545;border-radius:0.8px;box-shadow:0 0 0 0.5px #3c3c3c;"></div>
<span class="t" style="left:606.4px;top:274px;font-size:4.4px;line-height:7px;color:#bbb;">..</span>
<div style="left:526.2px;top:289px;width:117.8px;height:13px;background:#424242;"></div>
<div style="left:526.4px;top:289.6px;width:15.8px;height:12.4px;background:#535353;"></div>
<div style="left:542.2px;top:289.6px;width:0.5px;height:12.4px;background:#383838;"></div>
<span class="t" style="left:528.8px;top:292px;font-size:5px;line-height:8px;color:#f4f4f4;font-weight:bold;">图层</span>
<span class="t" style="left:545.8px;top:292px;font-size:5px;line-height:8px;color:#b4b4b4;">通道</span>
<span class="t" style="left:562.6px;top:292px;font-size:5px;line-height:8px;color:#b4b4b4;">路径</span>
<div style="left:638.3px;top:294.4px;width:4px;height:0.65px;background:#bdbdbd;"></div>
<div style="left:638.3px;top:295.54999999999995px;width:4px;height:0.65px;background:#bdbdbd;"></div>
<div style="left:638.3px;top:296.7px;width:4px;height:0.65px;background:#bdbdbd;"></div>
<div style="left:526.2px;top:301.8px;width:119.2px;height:131.2px;background:#535353;"></div>
<div style="left:638px;top:340.6px;width:6px;height:82.4px;background:#4d4d4d;"></div>
<div style="left:528px;top:305.8px;width:35px;height:8.2px;background:#4a4a4a;border-radius:1px;box-shadow:0 0 0 0.4px #404040;"></div>
<svg style="left:530.4px;top:307.6px;" width="4.6" height="4.6" viewBox="0 0 4.6 4.6"><circle cx="1.8" cy="1.8" r="1.3" fill="none" stroke="#c8c8c8" stroke-width="0.6"/><path d="M2.8 2.8L4.2 4.2" stroke="#c8c8c8" stroke-width="0.7"/></svg>
<span class="t" style="left:536.8px;top:306px;font-size:5px;line-height:8px;color:#858585;">类型</span>
<svg style="left:558.6px;top:309px;" width="3" height="2.2" viewBox="0 0 3 2.2"><path d="M0.3 0.3L1.5 1.7L2.7 0.3" fill="none" stroke="#8a8a8a" stroke-width="0.5"/></svg>
<svg style="left:569px;top:307.2px;" width="5.6" height="4.8" viewBox="0 0 5.6 4.8"><rect x="0.4" y="0.4" width="4.8" height="3.8" fill="none" stroke="#d4d4d4" stroke-width="0.7"/><path d="M0.8 3.6L2 2.2L3 3.2L3.8 2.6L4.8 3.6Z" fill="#d4d4d4"/></svg>
<svg style="left:580px;top:307px;" width="5" height="5" viewBox="0 0 5 5"><circle cx="2.5" cy="2.5" r="2" fill="none" stroke="#d4d4d4" stroke-width="0.7"/><path d="M2.5 0.5A2 2 0 0 1 2.5 4.5L4 1.2Z" fill="#d4d4d4"/></svg>
<span class="t" style="left:590.6px;top:306px;font-size:6px;line-height:8px;color:#d8d8d8;font-family:'Liberation Serif',serif;font-weight:bold;">T</span>
<svg style="left:600.4px;top:307px;" width="5.4" height="5.4" viewBox="0 0 5.4 5.4"><rect x="0.9" y="0.9" width="3.6" height="3.6" fill="none" stroke="#d4d4d4" stroke-width="0.6"/><rect x="0" y="0" width="1.6" height="1.6" fill="#d4d4d4"/><rect x="3.8" y="0" width="1.6" height="1.6" fill="#d4d4d4"/><rect x="0" y="3.8" width="1.6" height="1.6" fill="#d4d4d4"/><rect x="3.8" y="3.8" width="1.6" height="1.6" fill="#d4d4d4"/></svg>
<svg style="left:611px;top:307px;" width="5.4" height="5.4" viewBox="0 0 5.4 5.4"><path d="M0.4 0.4H3.4L4.6 1.6V5H0.4Z" fill="none" stroke="#d4d4d4" stroke-width="0.6"/><rect x="2.2" y="2.6" width="2.6" height="2.4" fill="#d4d4d4"/></svg>
<div style="left:622.2px;top:305.8px;width:3.8px;height:3.8px;background:#bdbdbd;border-radius:50%;"></div>
<div style="left:623.6px;top:309.6px;width:1px;height:1.8px;background:#777;"></div>
<div style="left:528px;top:318px;width:48px;height:8.4px;background:#454545;border-radius:0.8px;box-shadow:0 0 0 0.5px #3c3c3c;"></div>
<span class="t" style="left:531.4px;top:318px;font-size:5px;line-height:8px;color:#e0e0e0;">正常</span>
<svg style="left:571.4px;top:321.2px;" width="3.2" height="2.2" viewBox="0 0 3.2 2.2"><path d="M0.2 0.3L1.6 1.8L3 0.3" fill="none" stroke="#c8c8c8" stroke-width="0.6"/></svg>
<div style="left:569.6px;top:318px;width:0.5px;height:8.4px;background:#3a3a3a;"></div>
<span class="t" style="left:578.8px;top:318px;font-size:5px;line-height:8px;color:#dcdcdc;">不透明度:</span>
<div style="left:603.4px;top:318.4px;width:14.8px;height:7.6px;background:#454545;border-radius:0.8px;box-shadow:0 0 0 0.5px #3c3c3c;"></div>
<span class="t" style="left:604.6px;top:319px;font-size:4.8px;line-height:7px;color:#e0e0e0;">100%</span>
<div style="left:619.8px;top:318.4px;width:5.6px;height:7.6px;background:#454545;border-radius:0.8px;box-shadow:0 0 0 0.5px #3c3c3c;"></div>
<svg style="left:621px;top:321.2px;" width="3.2" height="2.2" viewBox="0 0 3.2 2.2"><path d="M0.2 0.3L1.6 1.8L3 0.3" fill="none" stroke="#c8c8c8" stroke-width="0.6"/></svg>
<span class="t" style="left:528.8px;top:330px;font-size:5px;line-height:8px;color:#8c8c8c;">锁定:</span>
<svg style="left:544px;top:331px;" width="5.4" height="5.4" viewBox="0 0 5.4 5.4"><rect x="0.4" y="0.4" width="4.6" height="4.6" fill="none" stroke="#cfcfcf" stroke-width="0.5" stroke-dasharray="0.8 0.5"/><rect x="1.2" y="1.2" width="1.5" height="1.5" fill="#cfcfcf"/><rect x="2.7" y="2.7" width="1.5" height="1.5" fill="#cfcfcf"/></svg>
<svg style="left:553.2px;top:330.6px;" width="6" height="6" viewBox="0 0 6 6"><path d="M5.6 0.4L2.6 3.6L3.2 4.2L5.9 0.9Z" fill="#d8d8d8"/><path d="M2.2 3.8C1.4 4 1.4 5 0.4 5.6C1.8 5.8 3 5.4 3 4.4Z" fill="#d8d8d8"/></svg>
<svg style="left:562.2px;top:330.8px;" width="5.6" height="5.6" viewBox="0 0 5.6 5.6"><path d="M2.8 0.2L3.7 1.3H3.2V2.4H4.3V1.9L5.4 2.8L4.3 3.7V3.2H3.2V4.3H3.7L2.8 5.4L1.9 4.3H2.4V3.2H1.3V3.7L0.2 2.8L1.3 1.9V2.4H2.4V1.3H1.9Z" fill="#cfcfcf"/></svg>
<svg style="left:571.2px;top:331px;" width="6" height="5.4" viewBox="0 0 6 5.4"><path d="M1.4 0V4H6M0 1.4H4.4V5.4" fill="none" stroke="#cfcfcf" stroke-width="0.6"/></svg>
<svg style="left:581px;top:330.6px;" width="4.6" height="6" viewBox="0 0 4.6 6"><rect x="0.3" y="2.6" width="4" height="3.1" fill="#d4d4d4"/><path d="M1.1 2.6V1.6A1.2 1.2 0 0 1 3.5 1.6V2.6" fill="none" stroke="#d4d4d4" stroke-width="0.7"/></svg>
<span class="t" style="left:588.8px;top:330px;font-size:5px;line-height:8px;color:#dcdcdc;">填充:</span>
<div style="left:603.4px;top:330px;width:14.8px;height:7.6px;background:#454545;border-radius:0.8px;box-shadow:0 0 0 0.5px #3c3c3c;"></div>
<span class="t" style="left:604.6px;top:331px;font-size:4.8px;line-height:7px;color:#e0e0e0;">100%</span>
<div style="left:619.8px;top:330px;width:5.6px;height:7.6px;background:#454545;border-radius:0.8px;box-shadow:0 0 0 0.5px #3c3c3c;"></div>
<svg style="left:621px;top:332.8px;" width="3.2" height="2.2" viewBox="0 0 3.2 2.2"><path d="M0.2 0.3L1.6 1.8L3 0.3" fill="none" stroke="#c8c8c8" stroke-width="0.6"/></svg>
<div style="left:526.2px;top:340.4px;width:111.4px;height:0.5px;background:#474747;"></div>
<div style="left:537.6px;top:340.8px;width:100.4px;height:10.6px;background:#6b6b6b;"></div>
<div style="left:526.2px;top:351.6px;width:111.4px;height:0.6px;background:#474747;"></div>
<div style="left:526.2px;top:363.6px;width:111.4px;height:0.6px;background:#474747;"></div>
<svg style="left:529px;top:344.2px;" width="6" height="4" viewBox="0 0 6 4"><path d="M0.2 2C1.6 0 4.4 0 5.8 2C4.4 4 1.6 4 0.2 2Z" fill="#e4e4e4"/><circle cx="3" cy="2" r="1" fill="#535353"/></svg>
<svg style="left:529px;top:356.2px;" width="6" height="4" viewBox="0 0 6 4"><path d="M0.2 2C1.6 0 4.4 0 5.8 2C4.4 4 1.6 4 0.2 2Z" fill="#e4e4e4"/><circle cx="3" cy="2" r="1" fill="#535353"/></svg>
<div style="left:539.2px;top:342px;width:15.2px;height:8.4px;background:#6b6b6b;border:0.7px dashed #e8e8e8;box-sizing:border-box;"></div>
<span class="t" style="left:545px;top:342px;font-size:5.4px;line-height:8px;color:#f4f4f4;font-family:'Liberation Serif',serif;font-weight:bold;">T</span>
<span class="t" style="left:557px;top:343px;font-size:4.9px;line-height:7px;color:#f0f0f0;">图层 1</span>
<div style="left:540.6px;top:354.4px;width:12.6px;height:7.6px;background:#fff;"></div>
<span class="t" style="left:557.6px;top:355px;font-size:4.9px;line-height:7px;color:#e4e4e4;">背景</span>
<svg style="left:627px;top:355.6px;" width="4.4" height="5.4" viewBox="0 0 4.4 5.4"><rect x="0.3" y="2.4" width="3.8" height="2.8" fill="none" stroke="#cfcfcf" stroke-width="0.6"/><path d="M1.1 2.4V1.5A1.1 1.1 0 0 1 3.3 1.5V2.4" fill="none" stroke="#cfcfcf" stroke-width="0.6"/></svg>
<div style="left:526.2px;top:422.8px;width:119.2px;height:0.6px;background:#454545;"></div>
<svg style="left:559.8px;top:426.6px;" width="6.4" height="3" viewBox="0 0 6.4 3"><rect x="0.3" y="0.3" width="3" height="2.4" rx="1.2" fill="none" stroke="#bdbdbd" stroke-width="0.6"/><rect x="3.1" y="0.3" width="3" height="2.4" rx="1.2" fill="none" stroke="#bdbdbd" stroke-width="0.6"/></svg>
<span class="t" style="left:571.4px;top:424px;font-size:5.2px;line-height:8px;color:#bdbdbd;font-style:italic;font-family:'Liberation Serif',serif;">fx</span>
<svg style="left:582.8px;top:425.6px;" width="5.6" height="4.8" viewBox="0 0 5.6 4.8"><rect x="0" y="0" width="5.6" height="4.8" fill="#bdbdbd"/><circle cx="2.8" cy="2.4" r="1.4" fill="#535353"/></svg>
<svg style="left:594.6px;top:425.6px;" width="5" height="5" viewBox="0 0 5 5"><circle cx="2.5" cy="2.5" r="2" fill="none" stroke="#bdbdbd" stroke-width="0.7"/><path d="M2.5 0.5A2 2 0 0 0 2.5 4.5Z" fill="#bdbdbd"/></svg>
<svg style="left:605.4px;top:425.8px;" width="6" height="4.6" viewBox="0 0 6 4.6"><path d="M0 0H2.2L2.8 0.8H6V4.6H0Z" fill="#bdbdbd"/></svg>
<svg style="left:617px;top:425.4px;" width="5" height="5.2" viewBox="0 0 5 5.2"><rect x="0.3" y="0.3" width="4.4" height="4.6" fill="none" stroke="#bdbdbd" stroke-width="0.6"/><path d="M2.5 1.4V3.8M1.3 2.6H3.7" stroke="#bdbdbd" stroke-width="0.6"/></svg>
<svg style="left:628px;top:425.2px;" width="4.6" height="5.6" viewBox="0 0 4.6 5.6"><path d="M0.2 1H4.4M1.6 1V0.3H3V1M0.8 1.4V5.3H3.8V1.4" fill="none" stroke="#bdbdbd" stroke-width="0.6"/></svg>
<div style="left:531px;top:0px;width:188.5px;height:14.8px;background:#4c4c4c;"></div>
<div style="left:531px;top:0px;width:0.7px;height:241.4px;background:#333;"></div>
<span class="t" style="left:533.6px;top:4px;font-size:5px;line-height:8px;color:#dcdcdc;">筛选:</span>
<div style="left:549.2px;top:3.9px;width:43.4px;height:7.7px;background:#454545;border-radius:0.8px;box-shadow:0 0 0 0.5px #3c3c3c;"></div>
<span class="t" style="left:552.2px;top:4px;font-size:5px;line-height:8px;color:#e0e0e0;">所有类</span>
<svg style="left:588.0px;top:6.75px;" width="3.2" height="2.2" viewBox="0 0 3.2 2.2"><path d="M0.2 0.3L1.6 1.8L3 0.3" fill="none" stroke="#c8c8c8" stroke-width="0.6"/></svg>
<div style="left:586.2px;top:3.9px;width:0.5px;height:7.7px;background:#3a3a3a;"></div>
<svg style="left:596.6px;top:5.4px;" width="8" height="5.6" viewBox="0 0 8 5.6"><path d="M2.4 5.1A1.9 1.9 0 0 1 2.2 1.4A2.4 2.4 0 0 1 6.3 1.7A1.75 1.75 0 0 1 6.2 5.1Z" fill="none" stroke="#d8d8d8" stroke-width="0.8"/><path d="M2.8 3.3C3.6 2.4 4.4 4.2 5.4 3.3" fill="none" stroke="#d8d8d8" stroke-width="0.6"/></svg>
<svg style="left:608px;top:4.4px;" width="7.4" height="7" viewBox="0 0 7.4 7"><path d="M3.7 0.2L4.8 2.5L7.3 2.8L5.4 4.5L5.9 7L3.7 5.8L1.5 7L2 4.5L0.1 2.8L2.6 2.5Z" fill="#e4e4e4"/></svg>
<span class="t" style="left:619.6px;top:1px;font-size:9.6px;line-height:13px;color:#e0e0e0;font-weight:bold;">≈</span>
<div style="left:632px;top:3.4px;width:0.6px;height:9px;background:#444;"></div>
<span class="t" style="left:636.6px;top:4px;font-size:5px;line-height:8px;color:#dcdcdc;">来自 Adobe Fonts 的更多字体:</span>
<svg style="left:708.4px;top:5.4px;" width="8" height="5.6" viewBox="0 0 8 5.6"><path d="M2.4 5.1A1.9 1.9 0 0 1 2.2 1.4A2.4 2.4 0 0 1 6.3 1.7A1.75 1.75 0 0 1 6.2 5.1Z" fill="none" stroke="#d8d8d8" stroke-width="0.8"/><path d="M2.8 3.3C3.6 2.4 4.4 4.2 5.4 3.3" fill="none" stroke="#d8d8d8" stroke-width="0.6"/></svg>
<div style="left:531.2px;top:14.8px;width:180.8px;height:226.1px;background:#fff;"></div>
<div style="left:712px;top:14.8px;width:7.4px;height:227px;background:#4a4a4a;"></div>
<div style="left:712.8px;top:22.6px;width:5.8px;height:55px;background:#6a6a6a;"></div>
<svg style="left:713.6px;top:18px;" width="4" height="2.6" viewBox="0 0 4 2.6"><path d="M0.3 2.2L2 0.4L3.7 2.2" fill="none" stroke="#9a9a9a" stroke-width="0.6"/></svg>
<svg style="left:713.6px;top:235.8px;" width="4" height="2.6" viewBox="0 0 4 2.6"><path d="M0.3 0.3L2 2.1L3.7 0.3" fill="none" stroke="#9a9a9a" stroke-width="0.6"/></svg>
<div style="left:531.2px;top:73.6px;width:180.8px;height:7.6px;background:#dadada;"></div>
<div style="left:531.2px;top:37.3px;width:180.8px;height:0.9px;background:#c4c4c4;"></div>
<div style="left:531.2px;top:179.3px;width:180.8px;height:0.9px;background:#c4c4c4;"></div>
<svg style="left:537.4px;top:42.4px;" width="6" height="5.8" viewBox="0 0 6.8 6.6"><path d="M3.4 0.5L4.3 2.5L6.5 2.8L4.9 4.3L5.3 6.4L3.4 5.4L1.5 6.4L1.9 4.3L0.3 2.8L2.5 2.5Z" fill="none" stroke="#333" stroke-width="0.75" stroke-linejoin="round"/></svg>
<span class="t" style="left:554px;top:42px;font-size:4.7px;line-height:7px;color:#383838;font-weight:500;">Adobe 黑体 Std</span>
<svg style="left:615px;top:42.5px;" width="6" height="6" viewBox="0 0 6 6"><g transform="skewX(-14)"><ellipse cx="3.8" cy="3" rx="1.55" ry="2.35" fill="none" stroke="#2a2a2a" stroke-width="0.95"/></g></svg>
<span class="t" style="left:626.4px;top:41px;font-size:5.4px;line-height:8px;color:#333;font-weight:bold;color:#222;">字体样式</span>
<svg style="left:537.4px;top:50.32px;" width="6" height="5.8" viewBox="0 0 6.8 6.6"><path d="M3.4 0.5L4.3 2.5L6.5 2.8L4.9 4.3L5.3 6.4L3.4 5.4L1.5 6.4L1.9 4.3L0.3 2.8L2.5 2.5Z" fill="none" stroke="#333" stroke-width="0.75" stroke-linejoin="round"/></svg>
<svg style="left:547.6px;top:51.52px;" width="2.4" height="3.8" viewBox="0 0 2.4 3.8"><path d="M0.3 0.3L1.9 1.9L0.3 3.5" fill="none" stroke="#666" stroke-width="0.5"/></svg>
<span class="t" style="left:554px;top:50px;font-size:4.7px;line-height:7px;color:#383838;font-weight:500;">Microsoft YaHei UI</span>
<span class="t" style="left:614px;top:49px;font-size:4.4px;line-height:7px;color:#2a2a2a;font-family:'Liberation Serif',serif;font-weight:bold;">T</span>
<span class="t" style="left:616.2px;top:48px;font-size:7.6px;line-height:11px;color:#2a2a2a;font-family:'Liberation Serif',serif;font-weight:bold;">T</span>
<span class="t" style="left:626.4px;top:49px;font-size:5.4px;line-height:8px;color:#333;font-weight:400;color:#4a4a4a;">字体样式</span>
<svg style="left:537.4px;top:58.24px;" width="6" height="5.8" viewBox="0 0 6.8 6.6"><path d="M3.4 0.5L4.3 2.5L6.5 2.8L4.9 4.3L5.3 6.4L3.4 5.4L1.5 6.4L1.9 4.3L0.3 2.8L2.5 2.5Z" fill="none" stroke="#333" stroke-width="0.75" stroke-linejoin="round"/></svg>
<span class="t" style="left:554px;top:58px;font-size:4.7px;line-height:7px;color:#383838;font-weight:500;">SimSun-ExtB</span>
<svg style="left:615px;top:58.34px;" width="6" height="6" viewBox="0 0 6 6"><g transform="skewX(-14)"><ellipse cx="3.8" cy="3" rx="1.55" ry="2.35" fill="none" stroke="#2a2a2a" stroke-width="0.95"/></g></svg>
<span class="t" style="left:626.2px;top:57px;font-size:5.6px;line-height:8px;color:#555;letter-spacing:-0.2px;font-weight:500;font-family:'Noto Sans CJK SC','Liberation Sans',sans-serif;">□□□□</span>
<svg style="left:537.4px;top:66.16px;" width="6" height="5.8" viewBox="0 0 6.8 6.6"><path d="M3.4 0.5L4.3 2.5L6.5 2.8L4.9 4.3L5.3 6.4L3.4 5.4L1.5 6.4L1.9 4.3L0.3 2.8L2.5 2.5Z" fill="none" stroke="#333" stroke-width="0.75" stroke-linejoin="round"/></svg>
<svg style="left:546.6px;top:68.25999999999999px;" width="3.6" height="2.4" viewBox="0 0 3.6 2.4"><path d="M0.3 0.3L1.8 1.9L3.3 0.3" fill="none" stroke="#666" stroke-width="0.5"/></svg>
<span class="t" style="left:554px;top:66px;font-size:4.7px;line-height:7px;color:#383838;font-weight:500;">阿里巴巴普惠体</span>
<span class="t" style="left:614px;top:65px;font-size:4.4px;line-height:7px;color:#2a2a2a;font-family:'Liberation Serif',serif;font-weight:bold;">T</span>
<span class="t" style="left:616.2px;top:64px;font-size:7.6px;line-height:11px;color:#2a2a2a;font-family:'Liberation Serif',serif;font-weight:bold;">T</span>
<span class="t" style="left:626.4px;top:65px;font-size:5.4px;line-height:8px;color:#333;font-weight:900;color:#111;">字体样式</span>
<span class="t" style="left:558px;top:74px;font-size:4.7px;line-height:7px;color:#383838;font-weight:500;">Heavy</span>
<span class="t" style="left:614px;top:73px;font-size:4.4px;line-height:7px;color:#2a2a2a;font-family:'Liberation Serif',serif;font-weight:bold;">T</span>
<span class="t" style="left:616.2px;top:72px;font-size:7.6px;line-height:11px;color:#2a2a2a;font-family:'Liberation Serif',serif;font-weight:bold;">T</span>
<span class="t" style="left:626.4px;top:73px;font-size:5.4px;line-height:8px;color:#333;font-weight:900;color:#111;">字体样式</span>
<span class="t" style="left:558px;top:82px;font-size:4.7px;line-height:7px;color:#383838;font-weight:500;">Light</span>
<span class="t" style="left:614px;top:81px;font-size:4.4px;line-height:7px;color:#2a2a2a;font-family:'Liberation Serif',serif;font-weight:bold;">T</span>
<span class="t" style="left:616.2px;top:80px;font-size:7.6px;line-height:11px;color:#2a2a2a;font-family:'Liberation Serif',serif;font-weight:bold;">T</span>
<span class="t" style="left:626.4px;top:81px;font-size:5.4px;line-height:8px;color:#333;font-weight:400;color:#4a4a4a;">字体样式</span>
<span class="t" style="left:558px;top:90px;font-size:4.7px;line-height:7px;color:#383838;font-weight:500;">Medium</span>
<span class="t" style="left:614px;top:89px;font-size:4.4px;line-height:7px;color:#2a2a2a;font-family:'Liberation Serif',serif;font-weight:bold;">T</span>
<span class="t" style="left:616.2px;top:88px;font-size:7.6px;line-height:11px;color:#2a2a2a;font-family:'Liberation Serif',serif;font-weight:bold;">T</span>
<span class="t" style="left:626.4px;top:89px;font-size:5.4px;line-height:8px;color:#333;font-weight:500;color:#333;">字体样式</span>
<span class="t" style="left:558px;top:98px;font-size:4.7px;line-height:7px;color:#383838;font-weight:500;">Regular</span>
<span class="t" style="left:614px;top:97px;font-size:4.4px;line-height:7px;color:#2a2a2a;font-family:'Liberation Serif',serif;font-weight:bold;">T</span>
<span class="t" style="left:616.2px;top:96px;font-size:7.6px;line-height:11px;color:#2a2a2a;font-family:'Liberation Serif',serif;font-weight:bold;">T</span>
<span class="t" style="left:626.4px;top:97px;font-size:5.4px;line-height:8px;color:#333;font-weight:400;color:#444;">字体样式</span>
<span class="t" style="left:558px;top:106px;font-size:4.7px;line-height:7px;color:#383838;font-weight:500;">Bold</span>
<span class="t" style="left:614px;top:105px;font-size:4.4px;line-height:7px;color:#2a2a2a;font-family:'Liberation Serif',serif;font-weight:bold;">T</span>
<span class="t" style="left:616.2px;top:104px;font-size:7.6px;line-height:11px;color:#2a2a2a;font-family:'Liberation Serif',serif;font-weight:bold;">T</span>
<span class="t" style="left:626.4px;top:105px;font-size:5.4px;line-height:8px;color:#333;font-weight:bold;color:#111;">字体样式</span>
<svg style="left:537.4px;top:113.68px;" width="6" height="5.8" viewBox="0 0 6.8 6.6"><path d="M3.4 0.5L4.3 2.5L6.5 2.8L4.9 4.3L5.3 6.4L3.4 5.4L1.5 6.4L1.9 4.3L0.3 2.8L2.5 2.5Z" fill="none" stroke="#333" stroke-width="0.75" stroke-linejoin="round"/></svg>
<svg style="left:547.6px;top:114.88px;" width="2.4" height="3.8" viewBox="0 0 2.4 3.8"><path d="M0.3 0.3L1.9 1.9L0.3 3.5" fill="none" stroke="#666" stroke-width="0.5"/></svg>
<span class="t" style="left:554px;top:114px;font-size:4.7px;line-height:7px;color:#383838;font-weight:500;">等线</span>
<svg style="left:615px;top:113.78px;" width="6" height="6" viewBox="0 0 6 6"><g transform="skewX(-14)"><ellipse cx="3.8" cy="3" rx="1.55" ry="2.35" fill="none" stroke="#2a2a2a" stroke-width="0.95"/></g></svg>
<span class="t" style="left:626.4px;top:113px;font-size:5.4px;line-height:8px;color:#333;font-weight:400;color:#555;">字体样式</span>
<svg style="left:537.4px;top:121.60000000000001px;" width="6" height="5.8" viewBox="0 0 6.8 6.6"><path d="M3.4 0.5L4.3 2.5L6.5 2.8L4.9 4.3L5.3 6.4L3.4 5.4L1.5 6.4L1.9 4.3L0.3 2.8L2.5 2.5Z" fill="none" stroke="#333" stroke-width="0.75" stroke-linejoin="round"/></svg>
<span class="t" style="left:554px;top:121px;font-size:4.7px;line-height:7px;color:#383838;font-weight:500;">方正粗黑宋简体</span>
<span class="t" style="left:614px;top:120px;font-size:4.4px;line-height:7px;color:#2a2a2a;font-family:'Liberation Serif',serif;font-weight:bold;">T</span>
<span class="t" style="left:616.2px;top:120px;font-size:7.6px;line-height:11px;color:#2a2a2a;font-family:'Liberation Serif',serif;font-weight:bold;">T</span>
<span class="t" style="left:626.4px;top:121px;font-size:5.4px;line-height:8px;color:#333;font-family:'Liberation Serif','Noto Serif CJK SC',serif;font-weight:900;color:#111;">字体样式</span>
<svg style="left:537.4px;top:129.52px;" width="6" height="5.8" viewBox="0 0 6.8 6.6"><path d="M3.4 0.5L4.3 2.5L6.5 2.8L4.9 4.3L5.3 6.4L3.4 5.4L1.5 6.4L1.9 4.3L0.3 2.8L2.5 2.5Z" fill="none" stroke="#333" stroke-width="0.75" stroke-linejoin="round"/></svg>
<span class="t" style="left:554px;top:129px;font-size:4.7px;line-height:7px;color:#383838;font-weight:500;">仿宋</span>
<svg style="left:615px;top:129.62px;" width="6" height="6" viewBox="0 0 6 6"><g transform="skewX(-14)"><ellipse cx="3.8" cy="3" rx="1.55" ry="2.35" fill="none" stroke="#2a2a2a" stroke-width="0.95"/></g></svg>
<span class="t" style="left:626.4px;top:129px;font-size:5.4px;line-height:8px;color:#333;font-family:'Liberation Serif','Noto Serif CJK SC',serif;font-weight:400;color:#4a4a4a;">字体样式</span>
<svg style="left:537.4px;top:137.44px;" width="6" height="5.8" viewBox="0 0 6.8 6.6"><path d="M3.4 0.5L4.3 2.5L6.5 2.8L4.9 4.3L5.3 6.4L3.4 5.4L1.5 6.4L1.9 4.3L0.3 2.8L2.5 2.5Z" fill="none" stroke="#333" stroke-width="0.75" stroke-linejoin="round"/></svg>
<span class="t" style="left:554px;top:137px;font-size:4.7px;line-height:7px;color:#383838;font-weight:500;">黑体</span>
<svg style="left:615px;top:137.54px;" width="6" height="6" viewBox="0 0 6 6"><g transform="skewX(-14)"><ellipse cx="3.8" cy="3" rx="1.55" ry="2.35" fill="none" stroke="#2a2a2a" stroke-width="0.95"/></g></svg>
<span class="t" style="left:626.4px;top:137px;font-size:5.4px;line-height:8px;color:#333;font-weight:500;color:#333;">字体样式</span>
<svg style="left:537.4px;top:145.35999999999999px;" width="6" height="5.8" viewBox="0 0 6.8 6.6"><path d="M3.4 0.5L4.3 2.5L6.5 2.8L4.9 4.3L5.3 6.4L3.4 5.4L1.5 6.4L1.9 4.3L0.3 2.8L2.5 2.5Z" fill="none" stroke="#333" stroke-width="0.75" stroke-linejoin="round"/></svg>
<span class="t" style="left:554px;top:145px;font-size:4.7px;line-height:7px;color:#383838;font-weight:500;">楷体</span>
<svg style="left:615px;top:145.45999999999998px;" width="6" height="6" viewBox="0 0 6 6"><g transform="skewX(-14)"><ellipse cx="3.8" cy="3" rx="1.55" ry="2.35" fill="none" stroke="#2a2a2a" stroke-width="0.95"/></g></svg>
<span class="t" style="left:626.4px;top:144px;font-size:5.4px;line-height:8px;color:#333;font-family:'Liberation Serif','Noto Serif CJK SC',serif;font-weight:400;color:#444;font-style:italic;">字体样式</span>
<svg style="left:537.4px;top:153.28px;" width="6" height="5.8" viewBox="0 0 6.8 6.6"><path d="M3.4 0.5L4.3 2.5L6.5 2.8L4.9 4.3L5.3 6.4L3.4 5.4L1.5 6.4L1.9 4.3L0.3 2.8L2.5 2.5Z" fill="none" stroke="#333" stroke-width="0.75" stroke-linejoin="round"/></svg>
<span class="t" style="left:554px;top:153px;font-size:4.7px;line-height:7px;color:#383838;font-weight:500;">宋体</span>
<span class="t" style="left:614px;top:152px;font-size:4.4px;line-height:7px;color:#2a2a2a;font-family:'Liberation Serif',serif;font-weight:bold;">T</span>
<span class="t" style="left:616.2px;top:151px;font-size:7.6px;line-height:11px;color:#2a2a2a;font-family:'Liberation Serif',serif;font-weight:bold;">T</span>
<span class="t" style="left:626.4px;top:152px;font-size:5.4px;line-height:8px;color:#333;font-family:'Liberation Serif','Noto Serif CJK SC',serif;font-weight:400;color:#555;">字体样式</span>
<svg style="left:537.4px;top:161.20000000000002px;" width="6" height="5.8" viewBox="0 0 6.8 6.6"><path d="M3.4 0.5L4.3 2.5L6.5 2.8L4.9 4.3L5.3 6.4L3.4 5.4L1.5 6.4L1.9 4.3L0.3 2.8L2.5 2.5Z" fill="none" stroke="#333" stroke-width="0.75" stroke-linejoin="round"/></svg>
<svg style="left:547.6px;top:162.4px;" width="2.4" height="3.8" viewBox="0 0 2.4 3.8"><path d="M0.3 0.3L1.9 1.9L0.3 3.5" fill="none" stroke="#666" stroke-width="0.5"/></svg>
<span class="t" style="left:554px;top:161px;font-size:4.7px;line-height:7px;color:#383838;font-weight:500;">微软雅黑</span>
<span class="t" style="left:614px;top:160px;font-size:4.4px;line-height:7px;color:#2a2a2a;font-family:'Liberation Serif',serif;font-weight:bold;">T</span>
<span class="t" style="left:616.2px;top:159px;font-size:7.6px;line-height:11px;color:#2a2a2a;font-family:'Liberation Serif',serif;font-weight:bold;">T</span>
<span class="t" style="left:626.4px;top:160px;font-size:5.4px;line-height:8px;color:#333;font-weight:400;color:#444;">字体样式</span>
<svg style="left:537.4px;top:169.12px;" width="6" height="5.8" viewBox="0 0 6.8 6.6"><path d="M3.4 0.5L4.3 2.5L6.5 2.8L4.9 4.3L5.3 6.4L3.4 5.4L1.5 6.4L1.9 4.3L0.3 2.8L2.5 2.5Z" fill="none" stroke="#333" stroke-width="0.75" stroke-linejoin="round"/></svg>
<span class="t" style="left:554px;top:169px;font-size:4.7px;line-height:7px;color:#383838;font-weight:500;">新宋体</span>
<span class="t" style="left:614px;top:168px;font-size:4.4px;line-height:7px;color:#2a2a2a;font-family:'Liberation Serif',serif;font-weight:bold;">T</span>
<span class="t" style="left:616.2px;top:167px;font-size:7.6px;line-height:11px;color:#2a2a2a;font-family:'Liberation Serif',serif;font-weight:bold;">T</span>
<span class="t" style="left:626.4px;top:168px;font-size:5.4px;line-height:8px;color:#333;font-family:'Liberation Serif','Noto Serif CJK SC',serif;font-weight:400;color:#555;">字体样式</span>
<svg style="left:537.4px;top:184.4px;" width="6" height="5.8" viewBox="0 0 6.8 6.6"><path d="M3.4 0.5L4.3 2.5L6.5 2.8L4.9 4.3L5.3 6.4L3.4 5.4L1.5 6.4L1.9 4.3L0.3 2.8L2.5 2.5Z" fill="none" stroke="#333" stroke-width="0.75" stroke-linejoin="round"/></svg>
<svg style="left:547.6px;top:185.6px;" width="2.4" height="3.8" viewBox="0 0 2.4 3.8"><path d="M0.3 0.3L1.9 1.9L0.3 3.5" fill="none" stroke="#666" stroke-width="0.5"/></svg>
<span class="t" style="left:554px;top:184px;font-size:4.7px;line-height:7px;color:#383838;font-weight:500;">Acumin Variable Concept</span>
<span class="t" style="left:613.6px;top:182px;font-size:7.4px;line-height:11px;color:#333;font-family:'Liberation Serif',serif;font-weight:bold;">G</span>
<div style="left:618.2px;top:187.9px;width:4.6px;height:0.6px;background:#444;"></div>
<div style="left:618.2px;top:189.0px;width:4.6px;height:0.6px;background:#444;"></div>
<div style="left:618.2px;top:190.1px;width:4.6px;height:0.6px;background:#444;"></div>
<span class="t" style="left:626.4px;top:183px;font-size:5.4px;line-height:8px;color:#333;font-size:4.2px;color:#444;letter-spacing:-0.2px;">Sample</span>
<svg style="left:537.4px;top:192.32px;" width="6" height="5.8" viewBox="0 0 6.8 6.6"><path d="M3.4 0.5L4.3 2.5L6.5 2.8L4.9 4.3L5.3 6.4L3.4 5.4L1.5 6.4L1.9 4.3L0.3 2.8L2.5 2.5Z" fill="none" stroke="#333" stroke-width="0.75" stroke-linejoin="round"/></svg>
<svg style="left:547.6px;top:193.51999999999998px;" width="2.4" height="3.8" viewBox="0 0 2.4 3.8"><path d="M0.3 0.3L1.9 1.9L0.3 3.5" fill="none" stroke="#666" stroke-width="0.5"/></svg>
<span class="t" style="left:554px;top:192px;font-size:4.7px;line-height:7px;color:#383838;font-weight:500;">Alibaba Sans</span>
<svg style="left:615px;top:192.42px;" width="6" height="6" viewBox="0 0 6 6"><g transform="skewX(-14)"><ellipse cx="3.8" cy="3" rx="1.55" ry="2.35" fill="none" stroke="#2a2a2a" stroke-width="0.95"/></g></svg>
<span class="t" style="left:626.4px;top:191px;font-size:5.4px;line-height:8px;color:#333;font-size:5.9px;color:#3a3a3a;">Sample</span>
<svg style="left:537.4px;top:200.24px;" width="6" height="5.8" viewBox="0 0 6.8 6.6"><path d="M3.4 0.5L4.3 2.5L6.5 2.8L4.9 4.3L5.3 6.4L3.4 5.4L1.5 6.4L1.9 4.3L0.3 2.8L2.5 2.5Z" fill="none" stroke="#333" stroke-width="0.75" stroke-linejoin="round"/></svg>
<svg style="left:547.6px;top:201.44px;" width="2.4" height="3.8" viewBox="0 0 2.4 3.8"><path d="M0.3 0.3L1.9 1.9L0.3 3.5" fill="none" stroke="#666" stroke-width="0.5"/></svg>
<span class="t" style="left:554px;top:200px;font-size:4.7px;line-height:7px;color:#383838;font-weight:500;">Arial</span>
<svg style="left:615px;top:200.34px;" width="6" height="6" viewBox="0 0 6 6"><g transform="skewX(-14)"><ellipse cx="3.8" cy="3" rx="1.55" ry="2.35" fill="none" stroke="#2a2a2a" stroke-width="0.95"/></g></svg>
<span class="t" style="left:626.4px;top:199px;font-size:5.4px;line-height:8px;color:#333;font-size:5.9px;color:#111;">Sample</span>
<svg style="left:537.4px;top:208.16px;" width="6" height="5.8" viewBox="0 0 6.8 6.6"><path d="M3.4 0.5L4.3 2.5L6.5 2.8L4.9 4.3L5.3 6.4L3.4 5.4L1.5 6.4L1.9 4.3L0.3 2.8L2.5 2.5Z" fill="none" stroke="#333" stroke-width="0.75" stroke-linejoin="round"/></svg>
<svg style="left:547.6px;top:209.35999999999999px;" width="2.4" height="3.8" viewBox="0 0 2.4 3.8"><path d="M0.3 0.3L1.9 1.9L0.3 3.5" fill="none" stroke="#666" stroke-width="0.5"/></svg>
<span class="t" style="left:554px;top:208px;font-size:4.7px;line-height:7px;color:#383838;font-weight:500;">Bahnschrift</span>
<span class="t" style="left:613.6px;top:206px;font-size:7.4px;line-height:11px;color:#333;font-family:'Liberation Serif',serif;font-weight:bold;">G</span>
<div style="left:618.2px;top:211.66px;width:4.6px;height:0.6px;background:#444;"></div>
<div style="left:618.2px;top:212.76px;width:4.6px;height:0.6px;background:#444;"></div>
<div style="left:618.2px;top:213.85999999999999px;width:4.6px;height:0.6px;background:#444;"></div>
<span class="t" style="left:626.4px;top:207px;font-size:5.4px;line-height:8px;color:#333;font-size:5px;color:#333;letter-spacing:-0.15px;">Sample</span>
<svg style="left:537.4px;top:216.08px;" width="6" height="5.8" viewBox="0 0 6.8 6.6"><path d="M3.4 0.5L4.3 2.5L6.5 2.8L4.9 4.3L5.3 6.4L3.4 5.4L1.5 6.4L1.9 4.3L0.3 2.8L2.5 2.5Z" fill="none" stroke="#333" stroke-width="0.75" stroke-linejoin="round"/></svg>
<svg style="left:547.6px;top:217.28px;" width="2.4" height="3.8" viewBox="0 0 2.4 3.8"><path d="M0.3 0.3L1.9 1.9L0.3 3.5" fill="none" stroke="#666" stroke-width="0.5"/></svg>
<span class="t" style="left:554px;top:216px;font-size:4.7px;line-height:7px;color:#383838;font-weight:500;">Calibri</span>
<svg style="left:615px;top:216.18px;" width="6" height="6" viewBox="0 0 6 6"><g transform="skewX(-14)"><ellipse cx="3.8" cy="3" rx="1.55" ry="2.35" fill="none" stroke="#2a2a2a" stroke-width="0.95"/></g></svg>
<span class="t" style="left:626.4px;top:215px;font-size:5.4px;line-height:8px;color:#333;font-size:5px;color:#333;">Sample</span>
<svg style="left:537.4px;top:224.0px;" width="6" height="5.8" viewBox="0 0 6.8 6.6"><path d="M3.4 0.5L4.3 2.5L6.5 2.8L4.9 4.3L5.3 6.4L3.4 5.4L1.5 6.4L1.9 4.3L0.3 2.8L2.5 2.5Z" fill="none" stroke="#333" stroke-width="0.75" stroke-linejoin="round"/></svg>
<svg style="left:547.6px;top:225.2px;" width="2.4" height="3.8" viewBox="0 0 2.4 3.8"><path d="M0.3 0.3L1.9 1.9L0.3 3.5" fill="none" stroke="#666" stroke-width="0.5"/></svg>
<span class="t" style="left:554px;top:224px;font-size:4.7px;line-height:7px;color:#383838;font-weight:500;">Cambria</span>
<span class="t" style="left:614px;top:223px;font-size:4.4px;line-height:7px;color:#2a2a2a;font-family:'Liberation Serif',serif;font-weight:bold;">T</span>
<span class="t" style="left:616.2px;top:222px;font-size:7.6px;line-height:11px;color:#2a2a2a;font-family:'Liberation Serif',serif;font-weight:bold;">T</span>
<span class="t" style="left:626.4px;top:223px;font-size:5.4px;line-height:8px;color:#333;font-size:5.4px;color:#222;font-family:'Liberation Serif','Noto Serif CJK SC',serif;">Sample</span>
<svg style="left:537.4px;top:231.92px;" width="6" height="5.8" viewBox="0 0 6.8 6.6"><path d="M3.4 0.5L4.3 2.5L6.5 2.8L4.9 4.3L5.3 6.4L3.4 5.4L1.5 6.4L1.9 4.3L0.3 2.8L2.5 2.5Z" fill="none" stroke="#333" stroke-width="0.75" stroke-linejoin="round"/></svg>
<span class="t" style="left:554px;top:232px;font-size:4.7px;line-height:7px;color:#383838;font-weight:500;">Cambria Math</span>
<span class="t" style="left:614px;top:231px;font-size:4.4px;line-height:7px;color:#2a2a2a;font-family:'Liberation Serif',serif;font-weight:bold;">T</span>
<span class="t" style="left:616.2px;top:230px;font-size:7.6px;line-height:11px;color:#2a2a2a;font-family:'Liberation Serif',serif;font-weight:bold;">T</span>
<span class="t" style="left:626.4px;top:231px;font-size:5.4px;line-height:8px;color:#333;font-size:5.4px;color:#222;font-family:'Liberation Serif','Noto Serif CJK SC',serif;">Sample</span>
<svg style="left:537.4px;top:19.099999999999998px;" width="6" height="5.8" viewBox="0 0 6.8 6.6"><path d="M3.4 0.5L4.3 2.5L6.5 2.8L4.9 4.3L5.3 6.4L3.4 5.4L1.5 6.4L1.9 4.3L0.3 2.8L2.5 2.5Z" fill="none" stroke="#333" stroke-width="0.75" stroke-linejoin="round"/></svg>
<span class="t" style="left:554px;top:19px;font-size:4.7px;line-height:7px;color:#383838;">EmojiOne</span>
<span class="t" style="left:613.6px;top:17px;font-size:7.4px;line-height:11px;color:#333;font-family:'Liberation Serif',serif;font-weight:bold;">G</span>
<div style="left:618.2px;top:22.599999999999998px;width:4.6px;height:0.6px;background:#444;"></div>
<div style="left:618.2px;top:23.7px;width:4.6px;height:0.6px;background:#444;"></div>
<div style="left:618.2px;top:24.8px;width:4.6px;height:0.6px;background:#444;"></div>
<svg style="left:626.6px;top:19.8px;" width="4.8" height="4.8" viewBox="0 0 4.8 4.8"><circle cx="2.4" cy="2.4" r="2.2" fill="#f2c230"/></svg>
<svg style="left:632.1px;top:19.8px;" width="4.8" height="4.8" viewBox="0 0 4.8 4.8"><circle cx="2.4" cy="2.4" r="2.2" fill="#f2c230"/></svg>
<svg style="left:637.6px;top:19.8px;" width="4.8" height="4.8" viewBox="0 0 4.8 4.8"><circle cx="2.4" cy="2.4" r="2.2" fill="#5aa6e0"/></svg>
<svg style="left:643.1px;top:19.8px;" width="4.8" height="4.8" viewBox="0 0 4.8 4.8"><circle cx="2.4" cy="2.4" r="2.2" fill="#444"/><circle cx="2.4" cy="2.4" r="1" fill="#fff"/></svg>
<svg style="left:648.6px;top:19.8px;" width="4.8" height="4.8" viewBox="0 0 4.8 4.8"><circle cx="2.4" cy="2.4" r="2.2" fill="#4caf50"/><circle cx="2.4" cy="2.4" r="1" fill="#fff"/></svg>
<svg style="left:654.1px;top:19.8px;" width="4.8" height="4.8" viewBox="0 0 4.8 4.8"><circle cx="2.4" cy="2.4" r="2.2" fill="#e8e4c8"/></svg>
<svg style="left:537.4px;top:27.0px;" width="6" height="5.8" viewBox="0 0 6.8 6.6"><path d="M3.4 0.5L4.3 2.5L6.5 2.8L4.9 4.3L5.3 6.4L3.4 5.4L1.5 6.4L1.9 4.3L0.3 2.8L2.5 2.5Z" fill="none" stroke="#333" stroke-width="0.75" stroke-linejoin="round"/></svg>
<span class="t" style="left:554px;top:27px;font-size:4.7px;line-height:7px;color:#383838;">Segoe UI Emoji</span>
<svg style="left:615px;top:27.1px;" width="6" height="6" viewBox="0 0 6 6"><g transform="skewX(-14)"><ellipse cx="3.8" cy="3" rx="1.55" ry="2.35" fill="none" stroke="#2a2a2a" stroke-width="0.95"/></g></svg>
<svg style="left:626.2px;top:27.1px;" width="6" height="6" viewBox="0 0 6 6"><circle cx="3" cy="3" r="2.5" fill="#fff" stroke="#222" stroke-width="0.8"/><circle cx="2.1" cy="2.4" r="0.4" fill="#222"/><circle cx="3.9" cy="2.4" r="0.4" fill="#222"/><path d="M1.9 4Q3 5 4.1 4" stroke="#222" stroke-width="0.5" fill="none"/></svg>
<svg style="left:633.5px;top:27.1px;" width="6" height="6" viewBox="0 0 6 6"><circle cx="3" cy="3" r="2.5" fill="#fff" stroke="#222" stroke-width="0.8"/><circle cx="2.1" cy="2.4" r="0.4" fill="#222"/><circle cx="3.9" cy="2.4" r="0.4" fill="#222"/><path d="M1.9 4Q3 3.2 4.1 4" stroke="#222" stroke-width="0.5" fill="none"/></svg>
<svg style="left:640.8000000000001px;top:27.1px;" width="6" height="6" viewBox="0 0 6 6"><path d="M1 0.6H5V2.4A2 2 0 0 1 1 2.4ZM3 4.4V5.6M1.6 5.8H4.4" fill="#222" stroke="#222" stroke-width="0.7"/></svg>
<svg style="left:648.1px;top:27.1px;" width="6" height="6" viewBox="0 0 6 6"><circle cx="3" cy="3" r="2.5" fill="#fff" stroke="#222" stroke-width="0.8"/><path d="M3 1.8L4.1 2.6L3.7 3.9H2.3L1.9 2.6Z" fill="#222"/></svg>
<svg style="left:655.4000000000001px;top:27.1px;" width="6" height="6" viewBox="0 0 6 6"><path d="M0.6 5.6C0.6 2 2 0.6 3 0.6C4 0.6 5.4 2 5.4 5.6Z" fill="#fff" stroke="#222" stroke-width="0.8"/><circle cx="3" cy="3.6" r="1" fill="#222"/></svg>
<svg style="left:662.7px;top:27.1px;" width="6" height="6" viewBox="0 0 6 6"><path d="M0.5 5.2C0.5 1 5.5 1 5.5 5.2Z" fill="#fff" stroke="#222" stroke-width="0.8"/><path d="M0.5 5.4H5.5" stroke="#222" stroke-width="0.9"/></svg>
<div style="left:17px;top:425.8px;width:484px;height:7.2px;background:#4e4e4e;"></div>
<div style="left:17px;top:426.6px;width:96px;height:6.4px;background:#535353;"></div>
<span class="t" style="left:22px;top:427px;font-size:4.8px;line-height:7px;color:#dcdcdc;">50%</span>
<div style="left:35.4px;top:427px;width:0.5px;height:6px;background:#444;"></div>
<span class="t" style="left:38.4px;top:427px;font-size:4.8px;line-height:7px;color:#dcdcdc;">1920 像素 x 1080 像素 (100 ppi)</span>
<svg style="left:109.4px;top:428.2px;" width="2.4" height="3.6" viewBox="0 0 2.4 3.6"><path d="M0.3 0.3L1.9 1.8L0.3 3.3" fill="none" stroke="#cfcfcf" stroke-width="0.5"/></svg>
<div style="left:0px;top:433px;width:800px;height:17px;background:#09131d;"></div>
<div style="left:7.0px;top:438.0px;width:3.3px;height:3.3px;background:#f4f4f4;"></div>
<div style="left:7.0px;top:441.8px;width:3.3px;height:3.3px;background:#f4f4f4;"></div>
<div style="left:10.8px;top:438.0px;width:3.3px;height:3.3px;background:#f4f4f4;"></div>
<div style="left:10.8px;top:441.8px;width:3.3px;height:3.3px;background:#f4f4f4;"></div>
<svg style="left:26.6px;top:437.4px;" width="10" height="9" viewBox="0 0 10 9"><path d="M0.3 1H3.6L4.4 2H9.7V8.6H0.3Z" fill="#f6c444"/><path d="M0.3 3.4H9.7V8.6H0.3Z" fill="#fbd96a"/><rect x="2.6" y="5.4" width="4.8" height="3.2" fill="#3a9be8"/><rect x="3.6" y="6.6" width="2.8" height="2" fill="#e8f4ff"/></svg>
<svg style="left:47px;top:437px;" width="10" height="10" viewBox="0 0 10 10"><circle cx="5" cy="5" r="4.6" fill="#4fc02a"/><circle cx="5" cy="5" r="3.2" fill="#d8f5c4"/><path d="M3.4 3.2H6.6M3.4 5H6.6M3.4 6.8H6.6" stroke="#3aa51e" stroke-width="0.9"/></svg>
<svg style="left:66.4px;top:436.8px;" width="10" height="10" viewBox="0 0 10 10"><circle cx="5" cy="5" r="4.3" fill="#1a1a1a" stroke="#f4f4f4" stroke-width="0.8"/><circle cx="5" cy="5" r="2.9" fill="#e8241c"/></svg>
<span class="t" style="left:78.2px;top:438px;font-size:5.4px;line-height:8px;color:#ffffff;">Bandicam</span>
<div style="left:64px;top:448.6px;width:62px;height:1.4px;background:#7fb8e8;"></div>
<div style="left:130px;top:433px;width:66.4px;height:17px;background:#2c3942;"></div>
<div style="left:130px;top:448.6px;width:66.4px;height:1.4px;background:#8cc4f0;"></div>
<div style="left:134.6px;top:437.2px;width:9px;height:8.8px;background:#0b2233;border:0.8px solid #4db4ff;border-radius:1.2px;box-sizing:border-box;"></div>
<span class="t" style="left:136.2px;top:438px;font-size:5px;line-height:8px;color:#6cc0ff;font-weight:bold;letter-spacing:-0.3px;">Ps</span>
<span class="t" style="left:146px;top:438px;font-size:5.2px;line-height:8px;color:#ffffff;">未标题-1 @ 50%(...</span>
<svg style="left:674px;top:437.4px;" width="9" height="9" viewBox="0 0 9 9"><circle cx="4.5" cy="4.5" r="3.9" fill="#1a1a1a" stroke="#ddd" stroke-width="0.7"/><circle cx="4.5" cy="4.5" r="2.5" fill="#e8241c"/></svg>
<svg style="left:683.4px;top:437.9px;" width="8" height="8" viewBox="0 0 8 8"><circle cx="4" cy="4" r="3.8" fill="#2d8cf0"/><path d="M2 3.4L5.8 2.4L5 5.8L3.6 4.6Z" fill="#fff"/></svg>
<svg style="left:693.4px;top:437.9px;" width="9.4" height="8" viewBox="0 0 9.4 8"><ellipse cx="3.8" cy="3.4" rx="3.6" ry="3" fill="#5bd03a"/><ellipse cx="6.4" cy="5" rx="2.8" ry="2.4" fill="#e8ffe0"/></svg>
<svg style="left:703.6px;top:437.5px;" width="8" height="9" viewBox="0 0 8 9"><ellipse cx="4" cy="4.6" rx="2.8" ry="3.8" fill="#222"/><ellipse cx="4" cy="5.6" rx="1.8" ry="2.4" fill="#f4f4f4"/><path d="M1.4 5.4H6.6" stroke="#e8241c" stroke-width="1.1"/><path d="M2 8.4H6" stroke="#f0a020" stroke-width="1"/></svg>
<svg style="left:714px;top:437.9px;" width="8.4" height="8" viewBox="0 0 8.4 8"><circle cx="3" cy="2.6" r="2" fill="#ddd"/><path d="M0.4 7.6C0.4 4.6 5.6 4.6 5.6 7.6Z" fill="#ddd"/><circle cx="6.2" cy="5.4" r="2" fill="#888"/></svg>
<svg style="left:724.4px;top:438.29999999999995px;" width="8.6" height="7.6" viewBox="0 0 8.6 7.6"><rect x="1.6" y="0.4" width="6.6" height="4.8" fill="none" stroke="#f0f0f0" stroke-width="0.8"/><path d="M4.9 5.2V6.8M3 7H6.8" stroke="#f0f0f0" stroke-width="0.8"/><rect x="0.2" y="2.8" width="2.4" height="4.2" fill="#0d1820" stroke="#f0f0f0" stroke-width="0.6"/></svg>
<svg style="left:734.4px;top:438.5px;" width="8" height="7" viewBox="0 0 8 7"><path d="M0.4 2.4H2L4 0.6V6.4L2 4.6H0.4Z" fill="#f0f0f0"/><path d="M5.2 2.2A2 2 0 0 1 5.2 4.8M6.4 1.2A3.4 3.4 0 0 1 6.4 5.8" fill="none" stroke="#f0f0f0" stroke-width="0.6"/></svg>
<span class="t" style="left:745.2px;top:437px;font-size:6.4px;line-height:9px;color:#f4f4f4;">中</span>
<div style="left:756.4px;top:438.5px;width:7px;height:6.8px;background:#f0501e;border-radius:1.2px;transform:rotate(-8deg);"></div>
<div style="left:797.8px;top:433px;width:0.5px;height:17px;background:#3a4650;"></div>
<span class="t" style="left:757.8px;top:438px;font-size:6px;line-height:8px;color:#fff;font-weight:bold;font-style:italic;">S</span>
<span class="t" style="left:777px;top:435px;font-size:4.8px;line-height:7px;color:#f4f4f4;">10:22</span>
<span class="t" style="left:771px;top:443px;font-size:4.8px;line-height:7px;color:#f4f4f4;">2020/3/27</span>
<div style="left:0px;top:0px;width:800px;height:0.9px;background:#757575;"></div>
<div style="left:155px;top:365.6px;width:495px;height:39.6px;background:rgba(128,128,128,0.5);"></div>
<span class="t" style="left:163.4px;top:374px;font-size:24px;line-height:29px;color:#f4f4f4;font-family:'Liberation Sans',sans-serif;">3</span>
<span class="t" style="left:175.8px;top:374px;font-size:24px;line-height:29px;color:#f4f4f4;font-family:'Liberation Sans',sans-serif;">.</span>
<span class="t" style="left:187.2px;top:378px;font-size:20.5px;line-height:24px;color:#f6f6f6;font-family:'Liberation Serif','Noto Serif CJK SC',serif;font-weight:600;letter-spacing:3.17px;">输入文字在字体栏中选择下载好的字体即可</span>
<div style="left:720px;top:368.8px;width:80px;height:8.3px;background:#fcfcfc;box-shadow:0 0.6px 1px rgba(0,0,0,0.35);"></div>
<div style="left:715.2px;top:367.5px;width:10.6px;height:10.2px;background:#f0501e;border-radius:2.2px;transform:rotate(-6deg);"></div>
<span class="t" style="left:717.4px;top:367px;font-size:9px;line-height:12px;color:#fff;font-weight:bold;font-style:italic;">S</span>
<span class="t" style="left:728.4px;top:368px;font-size:6.6px;line-height:9px;color:#1f6fd0;font-weight:bold;">中</span>
<div style="left:738.6px;top:371.2px;width:1.6px;height:1.6px;background:#1f6fd0;border-radius:50%;"></div>
<div style="left:740.6px;top:373.4px;width:1.6px;height:2.2px;background:#1f6fd0;border-radius:50%;"></div>
<svg style="left:745.6px;top:369.5px;" width="7" height="7" viewBox="0 0 7 7"><circle cx="3.5" cy="3.5" r="3" fill="none" stroke="#1f6fd0" stroke-width="0.8"/><circle cx="2.4" cy="2.8" r="0.5" fill="#1f6fd0"/><circle cx="4.6" cy="2.8" r="0.5" fill="#1f6fd0"/><path d="M2 4.2Q3.5 5.6 5 4.2" fill="none" stroke="#1f6fd0" stroke-width="0.6"/></svg>
<svg style="left:756.6px;top:369.2px;" width="5" height="7.6" viewBox="0 0 5 7.6"><rect x="1.4" y="0.2" width="2.2" height="4.4" rx="1.1" fill="#1f6fd0"/><path d="M0.4 3.4A2.1 2.1 0 0 0 4.6 3.4M2.5 5.6V7.2" fill="none" stroke="#1f6fd0" stroke-width="0.7"/></svg>
<svg style="left:764.6px;top:370.2px;" width="7.4" height="5.6" viewBox="0 0 7.4 5.6"><rect x="0.4" y="0.4" width="6.6" height="4.8" fill="#1f6fd0" rx="0.6"/><path d="M1.4 1.6H6M1.4 2.8H6M2.2 4H5.2" stroke="#fff" stroke-width="0.5" stroke-dasharray="0.7 0.5"/></svg>
<svg style="left:775px;top:369.8px;" width="6" height="6.6" viewBox="0 0 6 6.6"><circle cx="3" cy="1.6" r="1.3" fill="#9aa8b8"/><path d="M0.6 6.2C0.6 3 5.4 3 5.4 6.2Z" fill="#9aa8b8"/></svg>
<svg style="left:783px;top:370px;" width="7.4" height="6.2" viewBox="0 0 7.4 6.2"><path d="M0.2 1.6L2.4 0.2C3.2 1.2 4.2 1.2 5 0.2L7.2 1.6L6.2 3L5.6 2.6V6H1.8V2.6L1.2 3Z" fill="#1f6fd0"/></svg>
<div style="left:793.0px;top:369.9px;width:2.9px;height:2.9px;background:#1f6fd0;"></div>
<div style="left:793.0px;top:373.29999999999995px;width:2.9px;height:2.9px;background:#3a9be8;"></div>
<div style="left:796.4px;top:369.9px;width:2.9px;height:2.9px;background:#3a9be8;"></div>
<div style="left:796.4px;top:373.29999999999995px;width:2.9px;height:2.9px;background:#1f6fd0;"></div>
<svg style="left:608px;top:375px;" width="64" height="65" viewBox="0 0 64 65"><path d="M32 1L45 13.5L37 25.5H27L19 13.5Z" fill="#7fbf2a"/><path d="M1 33L14 20.5L24 28V38L14 46Z" fill="#10a0e8"/><path d="M63 33L50 20.5L40 28V38L50 46Z" fill="#10a0e8"/><path d="M32 64L19 52L27 41H37L45 52Z" fill="#10a0e8"/></svg>
<span class="t" style="left:679.6px;top:383px;font-size:34px;line-height:40px;color:rgba(44,44,44,0.85);font-weight:700;letter-spacing:2px;">系统</span>
<span class="t" style="left:755.4px;top:381px;font-size:38px;line-height:44px;color:#1e9ee8;font-weight:700;">城</span>
<span class="t" style="left:682.6px;top:425px;font-size:10.7px;line-height:14px;color:rgba(255,255,255,0.74);font-weight:bold;letter-spacing:0.42px;text-shadow:0.6px 0.6px 1px rgba(0,0,0,0.7);">XITONGCHENG.COM</span>
</div></body></html>
